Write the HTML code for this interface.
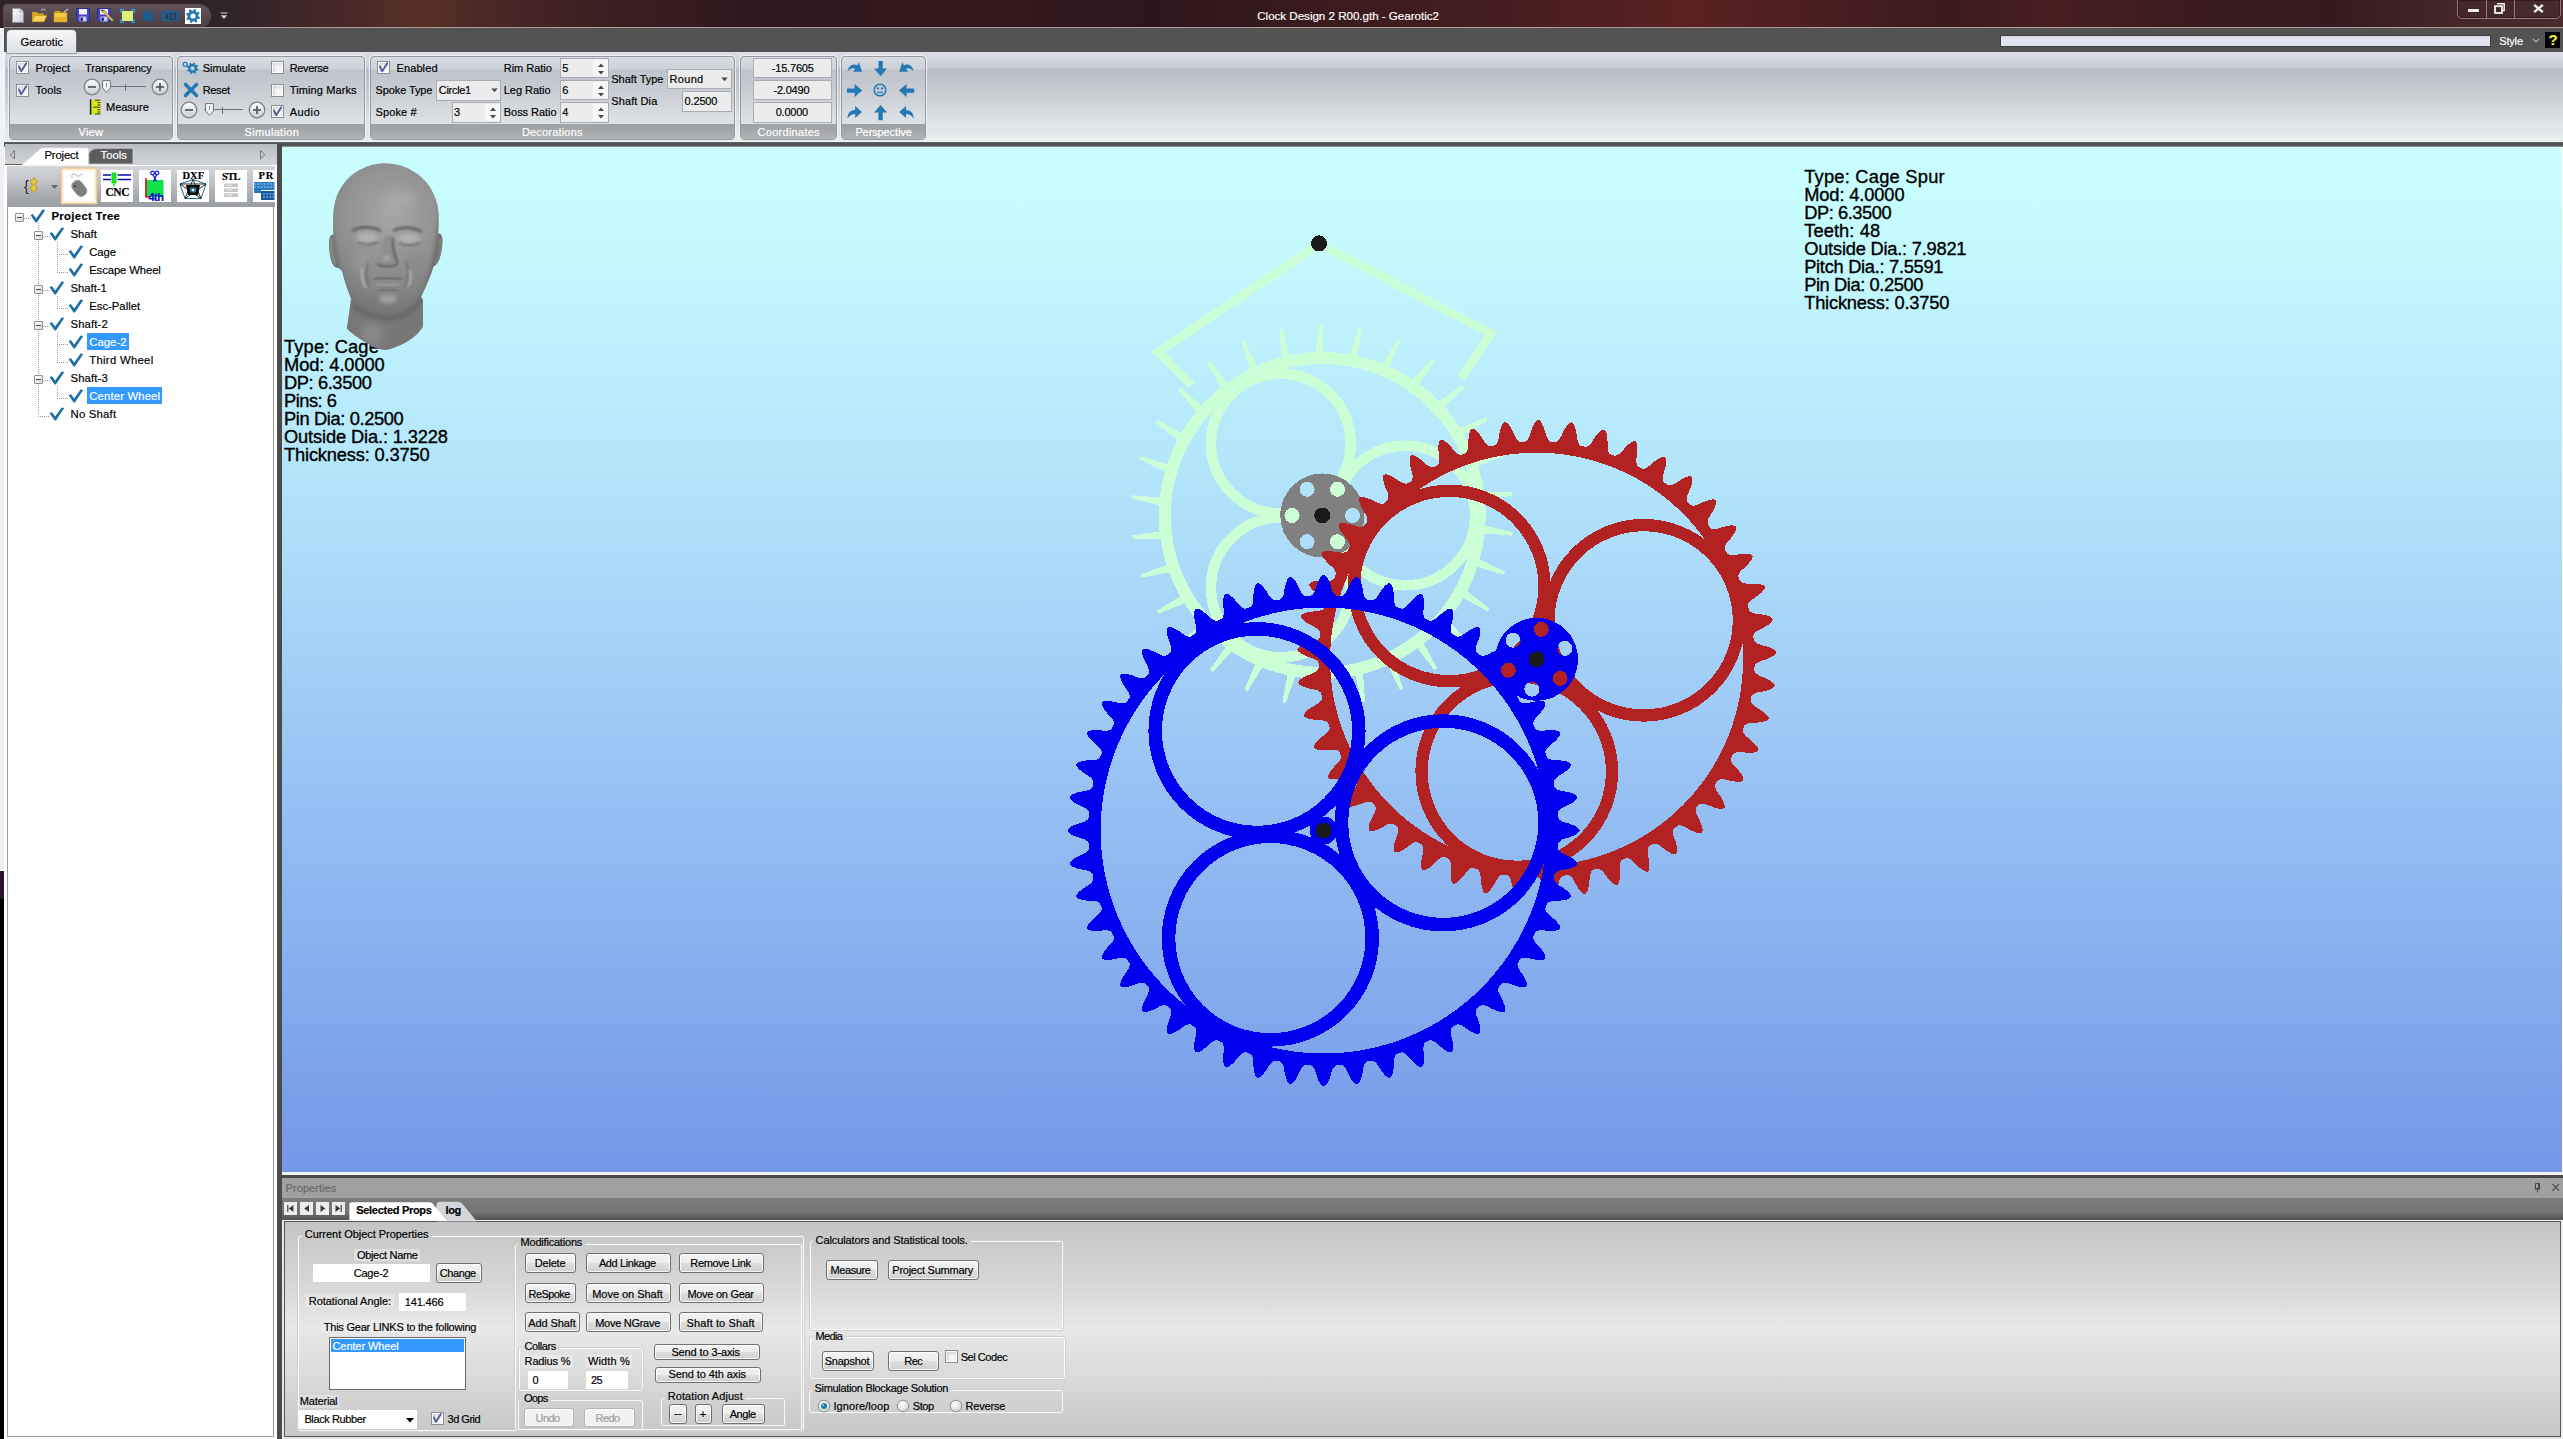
<!DOCTYPE html>
<html><head><meta charset="utf-8"><title>Clock Design 2 R00.gth - Gearotic2</title>
<style>
html,body{margin:0;padding:0;}
body{width:2563px;height:1439px;position:relative;overflow:hidden;background:#e8e8e8;font-family:"Liberation Sans",sans-serif;}
.t{position:absolute;white-space:nowrap;line-height:20px;font-family:"Liberation Sans",sans-serif;-webkit-text-stroke:0.18px currentColor;}
.abs{position:absolute;}
svg{position:absolute;left:0;top:0;overflow:visible;}
</style></head>
<body>
<div style="position:absolute;left:0.00px;top:0.00px;width:5.00px;height:1439.00px;background:linear-gradient(#f4f6fa,#f4f6fa);"></div>
<div style="position:absolute;left:0.00px;top:21.00px;width:4.00px;height:129.00px;background:#eef2fa;"></div>
<div style="position:absolute;left:0.00px;top:150.00px;width:4.00px;height:720.00px;background:#f0f0f0;"></div>
<div style="position:absolute;left:0.00px;top:870.00px;width:4.00px;height:29.00px;background:#2a1430;border-top:1px solid #fff;"></div>
<div style="position:absolute;left:0.00px;top:899.00px;width:4.00px;height:540.00px;background:#000;"></div>
<div style="position:absolute;left:4.00px;top:147.00px;width:3.00px;height:1292.00px;background:#fff;"></div>
<div style="position:absolute;left:0.00px;top:0.00px;width:2563.00px;height:28.00px;background:linear-gradient(90deg,#2e2227 0%,#30232a 9%,#4a2a26 14%,#5a3028 16.5%,#4a2824 19%,#3c2022 23%,#2c171d 30%,#33191e 37%,#2c161c 45%,#3a1b1e 52%,#441d1f 58%,#5a2120 66%,#4a1e1f 71%,#3a1a1d 76%,#491e1f 80%,#381b1f 86%,#341a1e 91%,#45272a 96%,#4a2c2e 100%);"></div>
<div style="position:absolute;left:4.00px;top:27.00px;width:2559.00px;height:1.00px;background:#b09a9c;"></div>
<div style="position:absolute;left:4.00px;top:28.00px;width:2559.00px;height:24.00px;background:#535353;"></div>
<div style="position:absolute;left:5.00px;top:52.00px;width:2558.00px;height:90.00px;background:linear-gradient(#dde0e5 0%,#c6cad2 18%,#b9bdc6 19%,#c4c8ce 40%,#dfe4e6 80%,#e8f0f0 100%);border-radius:0 0 3px 3px;"></div>
<div style="position:absolute;left:4.00px;top:142.00px;width:2559.00px;height:5.00px;background:linear-gradient(#6a6a6a,#4a4a4a 40%,#5a5a5a 70%,#9a9a9a);"></div>
<div class="abs" style="left:7px;top:30px;width:69px;height:23px;border-radius:4px 4px 0 0;background:linear-gradient(#f6f6f7,#e9ebee 55%,#dcdfe4);box-shadow:0 0 0 1px rgba(120,120,120,.6);"></div>
<span class="t" style="left:20.60px;top:32.08px;font-size:11.3px;color:#000;letter-spacing:-0.029px;">Gearotic</span>
<div class="abs" style="left:9px;top:56px;width:164px;height:84px;box-sizing:border-box;border:1px solid #959aa1;border-radius:4px;background:linear-gradient(#d9dce2 0%,#cdd1d8 15%,#bfc4cc 16%,#c8ccd3 40%,#dde2e5 80%,#e3e9ea 100%);box-shadow:0 0 0 1px rgba(240,243,246,.85);overflow:hidden;"><div class="abs" style="left:0;right:0;bottom:0;height:15px;background:linear-gradient(#9c9fa3,#a6a9ac 50%,#b1b3b5);"></div></div><span class="t" style="left:78.50px;top:121.79px;font-size:11px;color:#fff;letter-spacing:0.267px;">View</span>
<div class="abs" style="left:177px;top:56px;width:188px;height:84px;box-sizing:border-box;border:1px solid #959aa1;border-radius:4px;background:linear-gradient(#d9dce2 0%,#cdd1d8 15%,#bfc4cc 16%,#c8ccd3 40%,#dde2e5 80%,#e3e9ea 100%);box-shadow:0 0 0 1px rgba(240,243,246,.85);overflow:hidden;"><div class="abs" style="left:0;right:0;bottom:0;height:15px;background:linear-gradient(#9c9fa3,#a6a9ac 50%,#b1b3b5);"></div></div><span class="t" style="left:244.60px;top:121.79px;font-size:11px;color:#fff;letter-spacing:0.311px;">Simulation</span>
<div class="abs" style="left:370px;top:56px;width:365px;height:84px;box-sizing:border-box;border:1px solid #959aa1;border-radius:4px;background:linear-gradient(#d9dce2 0%,#cdd1d8 15%,#bfc4cc 16%,#c8ccd3 40%,#dde2e5 80%,#e3e9ea 100%);box-shadow:0 0 0 1px rgba(240,243,246,.85);overflow:hidden;"><div class="abs" style="left:0;right:0;bottom:0;height:15px;background:linear-gradient(#9c9fa3,#a6a9ac 50%,#b1b3b5);"></div></div><span class="t" style="left:521.90px;top:121.79px;font-size:11px;color:#fff;letter-spacing:0.190px;">Decorations</span>
<div class="abs" style="left:740px;top:56px;width:97px;height:84px;box-sizing:border-box;border:1px solid #959aa1;border-radius:4px;background:linear-gradient(#d9dce2 0%,#cdd1d8 15%,#bfc4cc 16%,#c8ccd3 40%,#dde2e5 80%,#e3e9ea 100%);box-shadow:0 0 0 1px rgba(240,243,246,.85);overflow:hidden;"><div class="abs" style="left:0;right:0;bottom:0;height:15px;background:linear-gradient(#9c9fa3,#a6a9ac 50%,#b1b3b5);"></div></div><span class="t" style="left:757.60px;top:121.79px;font-size:11px;color:#fff;letter-spacing:0.270px;">Coordinates</span>
<div class="abs" style="left:840.5px;top:56px;width:85.0px;height:84px;box-sizing:border-box;border:1px solid #959aa1;border-radius:4px;background:linear-gradient(#d9dce2 0%,#cdd1d8 15%,#bfc4cc 16%,#c8ccd3 40%,#dde2e5 80%,#e3e9ea 100%);box-shadow:0 0 0 1px rgba(240,243,246,.85);overflow:hidden;"><div class="abs" style="left:0;right:0;bottom:0;height:15px;background:linear-gradient(#9c9fa3,#a6a9ac 50%,#b1b3b5);"></div></div><span class="t" style="left:855.40px;top:121.79px;font-size:11px;color:#fff;letter-spacing:-0.110px;">Perspective</span>
<div class="abs" style="left:16px;top:61px;width:13px;height:13px;box-sizing:border-box;border:1px solid #8e8f8f;background:#f4f4f4;box-shadow:inset 0 0 0 1px #f9f9f9, inset 2px 2px 3px #c8ccd2;"></div><svg class="abs" style="left:16px;top:61px" width="13" height="13" viewBox="0 0 13 13"><path d="M3 5.6 L5.2 10.2 L10.3 2.2" fill="none" stroke="#4a5f97" stroke-width="1.9" stroke-linecap="round" stroke-linejoin="round"/></svg>
<span class="t" style="left:35.60px;top:58.09px;font-size:11px;color:#000;letter-spacing:0.025px;">Project</span>
<div class="abs" style="left:16px;top:83.5px;width:13px;height:13px;box-sizing:border-box;border:1px solid #8e8f8f;background:#f4f4f4;box-shadow:inset 0 0 0 1px #f9f9f9, inset 2px 2px 3px #c8ccd2;"></div><svg class="abs" style="left:16px;top:83.5px" width="13" height="13" viewBox="0 0 13 13"><path d="M3 5.6 L5.2 10.2 L10.3 2.2" fill="none" stroke="#4a5f97" stroke-width="1.9" stroke-linecap="round" stroke-linejoin="round"/></svg>
<span class="t" style="left:35.40px;top:79.94px;font-size:11px;color:#000;letter-spacing:0.125px;">Tools</span>
<span class="t" style="left:85.00px;top:58.09px;font-size:11px;color:#000;">Transparency</span>
<svg class="abs" style="left:82.9px;top:77.9px" width="18" height="18" viewBox="-9 -9 18 18"><defs><linearGradient id="zc" x1="0" y1="0" x2="0" y2="1"><stop offset="0" stop-color="#fdfdfd"/><stop offset="1" stop-color="#c9cdd2"/></linearGradient></defs><circle r="7.8" fill="url(#zc)" stroke="#7e8288" stroke-width="1.3"/><path d="M-4 0H4" stroke="#5b5f66" stroke-width="1.8"/></svg>
<svg class="abs" style="left:151.25px;top:77.9px" width="18" height="18" viewBox="-9 -9 18 18"><defs><linearGradient id="zc" x1="0" y1="0" x2="0" y2="1"><stop offset="0" stop-color="#fdfdfd"/><stop offset="1" stop-color="#c9cdd2"/></linearGradient></defs><circle r="7.8" fill="url(#zc)" stroke="#7e8288" stroke-width="1.3"/><path d="M-4 0H4" stroke="#5b5f66" stroke-width="1.8"/><path d="M0 -4V4" stroke="#5b5f66" stroke-width="1.8"/></svg>
<div class="abs" style="left:110px;top:86.2px;width:35.599999999999994px;height:1px;background:#6d7178;"></div><div class="abs" style="left:125.1px;top:83.7px;width:1px;height:7px;background:#6d7178;"></div><svg class="abs" style="left:102.3px;top:80.4px" width="9" height="13" viewBox="0 0 9 13"><path d="M0.6 0.6H8.4V8L4.5 12.3L0.6 8Z" fill="#f4f5f6" stroke="#6f737a" stroke-width="1"/><path d="M4.5 3V7" stroke="#8a8e94" stroke-width="1"/></svg>
<svg class="abs" style="left:89px;top:99px" width="13" height="16" viewBox="0 0 13 16"><rect x="1.6" y="0.8" width="9.8" height="14.4" fill="#d8ea1e"/><path d="M1.6 0.3V15.7" stroke="#222" stroke-width="1.5"/><path d="M6 1.2H11.4M8.5 3.6H11.4M8.5 6H11.4M4 8.2H11.4M8.5 10.6H11.4M8.5 13H11.4M6 15H11.4" stroke="#3a3a10" stroke-width="1"/></svg>
<span class="t" style="left:106.00px;top:96.79px;font-size:11px;color:#000;letter-spacing:-0.008px;">Measure</span>
<svg class="abs" style="left:182px;top:61px" width="18" height="14" viewBox="0 0 18 14"><path transform="translate(10.6,7.3)" d="M5.79,1.15 L5.45,2.26 L3.63,2.43 L3.09,3.09 L3.28,4.91 L2.26,5.45 L0.85,4.28 L0.00,4.37 L-1.15,5.79 L-2.26,5.45 L-2.43,3.63 L-3.09,3.09 L-4.91,3.28 L-5.45,2.26 L-4.28,0.85 L-4.37,0.00 L-5.79,-1.15 L-5.45,-2.26 L-3.63,-2.43 L-3.09,-3.09 L-3.28,-4.91 L-2.26,-5.45 L-0.85,-4.28 L-0.00,-4.37 L1.15,-5.79 L2.26,-5.45 L2.43,-3.63 L3.09,-3.09 L4.91,-3.28 L5.45,-2.26 L4.28,-0.85 L4.37,-0.00Z M-2.12,0 a2.12,2.12 0 1,0 4.25,0 a2.12,2.12 0 1,0 -4.25,0Z" fill="#2479b4" fill-rule="evenodd"/><circle cx="3.2" cy="3.4" r="2.1" fill="none" stroke="#2479b4" stroke-width="1.3"/></svg>
<span class="t" style="left:202.75px;top:58.19px;font-size:11px;color:#000;letter-spacing:0.007px;">Simulate</span>
<svg class="abs" style="left:182.5px;top:82px" width="16" height="16" viewBox="0 0 16 16"><path d="M2.5 2.5L13.5 13.5M13.5 2.5L2.5 13.5" stroke="#2479b4" stroke-width="3.6" stroke-linecap="round"/></svg>
<span class="t" style="left:202.75px;top:79.94px;font-size:11px;color:#000;letter-spacing:-0.375px;">Reset</span>
<svg class="abs" style="left:180.4px;top:101px" width="18" height="18" viewBox="-9 -9 18 18"><defs><linearGradient id="zc" x1="0" y1="0" x2="0" y2="1"><stop offset="0" stop-color="#fdfdfd"/><stop offset="1" stop-color="#c9cdd2"/></linearGradient></defs><circle r="7.8" fill="url(#zc)" stroke="#7e8288" stroke-width="1.3"/><path d="M-4 0H4" stroke="#5b5f66" stroke-width="1.8"/></svg>
<svg class="abs" style="left:248.10000000000002px;top:101px" width="18" height="18" viewBox="-9 -9 18 18"><defs><linearGradient id="zc" x1="0" y1="0" x2="0" y2="1"><stop offset="0" stop-color="#fdfdfd"/><stop offset="1" stop-color="#c9cdd2"/></linearGradient></defs><circle r="7.8" fill="url(#zc)" stroke="#7e8288" stroke-width="1.3"/><path d="M-4 0H4" stroke="#5b5f66" stroke-width="1.8"/><path d="M0 -4V4" stroke="#5b5f66" stroke-width="1.8"/></svg>
<div class="abs" style="left:203.75px;top:109.3px;width:38.75px;height:1px;background:#6d7178;"></div><div class="abs" style="left:222.4px;top:106.8px;width:1px;height:7px;background:#6d7178;"></div><svg class="abs" style="left:205.4px;top:103.3px" width="9" height="13" viewBox="0 0 9 13"><path d="M0.6 0.6H8.4V8L4.5 12.3L0.6 8Z" fill="#f4f5f6" stroke="#6f737a" stroke-width="1"/><path d="M4.5 3V7" stroke="#8a8e94" stroke-width="1"/></svg>
<div class="abs" style="left:270.5px;top:61px;width:13px;height:13px;box-sizing:border-box;border:1px solid #8e8f8f;background:#f4f4f4;box-shadow:inset 0 0 0 1px #f9f9f9, inset 2px 2px 3px #c8ccd2;"></div>
<span class="t" style="left:289.75px;top:58.09px;font-size:11px;color:#000;letter-spacing:-0.350px;">Reverse</span>
<div class="abs" style="left:270.5px;top:83.5px;width:13px;height:13px;box-sizing:border-box;border:1px solid #8e8f8f;background:#f4f4f4;box-shadow:inset 0 0 0 1px #f9f9f9, inset 2px 2px 3px #c8ccd2;"></div>
<span class="t" style="left:289.75px;top:79.94px;font-size:11px;color:#000;letter-spacing:0.114px;">Timing Marks</span>
<div class="abs" style="left:270.5px;top:105.4px;width:13px;height:13px;box-sizing:border-box;border:1px solid #8e8f8f;background:#f4f4f4;box-shadow:inset 0 0 0 1px #f9f9f9, inset 2px 2px 3px #c8ccd2;"></div><svg class="abs" style="left:270.5px;top:105.4px" width="13" height="13" viewBox="0 0 13 13"><path d="M3 5.6 L5.2 10.2 L10.3 2.2" fill="none" stroke="#4a5f97" stroke-width="1.9" stroke-linecap="round" stroke-linejoin="round"/></svg>
<span class="t" style="left:289.75px;top:101.79px;font-size:11px;color:#000;letter-spacing:0.425px;">Audio</span>
<div class="abs" style="left:377px;top:61px;width:13px;height:13px;box-sizing:border-box;border:1px solid #8e8f8f;background:#f4f4f4;box-shadow:inset 0 0 0 1px #f9f9f9, inset 2px 2px 3px #c8ccd2;"></div><svg class="abs" style="left:377px;top:61px" width="13" height="13" viewBox="0 0 13 13"><path d="M3 5.6 L5.2 10.2 L10.3 2.2" fill="none" stroke="#4a5f97" stroke-width="1.9" stroke-linecap="round" stroke-linejoin="round"/></svg>
<span class="t" style="left:396.50px;top:58.09px;font-size:11px;color:#000;letter-spacing:0.108px;">Enabled</span>
<span class="t" style="left:375.60px;top:79.94px;font-size:11px;color:#000;letter-spacing:-0.111px;">Spoke Type</span>
<div class="abs" style="left:436px;top:79.75px;width:65px;height:21.0px;box-sizing:border-box;border:1px solid #a9adb3;background:#ececec;"></div><svg class="abs" style="left:490.5px;top:88.0px" width="7" height="5" viewBox="0 0 7 5"><path d="M0.3 0.5H6.7L3.5 4.3Z" fill="#4a4a4a"/></svg><span class="t" style="left:438.75px;top:79.94px;font-size:11px;color:#000;letter-spacing:-0.292px;">Circle1</span>
<span class="t" style="left:375.60px;top:101.79px;font-size:11px;color:#000;letter-spacing:0.092px;">Spoke #</span>
<div class="abs" style="left:451.5px;top:101.9px;width:49.5px;height:20.69999999999999px;box-sizing:border-box;border:1px solid #a9adb3;background:#ececec;"></div><div class="abs" style="left:485px;top:103.9px;width:15px;height:16.69999999999999px;background:#f7f7f7;"></div><svg class="abs" style="left:488.8px;top:106.9px" width="8" height="12" viewBox="0 0 8 12"><path d="M4 0.5L7 4H1Z M4 11.5L7 8H1Z" fill="#4a4a4a"/></svg><span class="t" style="left:453.90px;top:101.79px;font-size:11px;color:#000;">3</span>
<span class="t" style="left:503.75px;top:58.09px;font-size:11px;color:#000;letter-spacing:-0.019px;">Rim Ratio</span>
<span class="t" style="left:503.75px;top:79.94px;font-size:11px;color:#000;letter-spacing:-0.031px;">Leg Ratio</span>
<span class="t" style="left:503.75px;top:101.79px;font-size:11px;color:#000;letter-spacing:-0.039px;">Boss Ratio</span>
<div class="abs" style="left:559.75px;top:57.5px;width:49.25px;height:20.700000000000003px;box-sizing:border-box;border:1px solid #a9adb3;background:#ececec;"></div><div class="abs" style="left:593px;top:59.5px;width:15px;height:16.700000000000003px;background:#f7f7f7;"></div><svg class="abs" style="left:596.8px;top:62.5px" width="8" height="12" viewBox="0 0 8 12"><path d="M4 0.5L7 4H1Z M4 11.5L7 8H1Z" fill="#4a4a4a"/></svg><span class="t" style="left:562.15px;top:58.09px;font-size:11px;color:#000;">5</span>
<div class="abs" style="left:559.75px;top:79.75px;width:49.25px;height:20.650000000000006px;box-sizing:border-box;border:1px solid #a9adb3;background:#ececec;"></div><div class="abs" style="left:593px;top:81.75px;width:15px;height:16.650000000000006px;background:#f7f7f7;"></div><svg class="abs" style="left:596.8px;top:84.75px" width="8" height="12" viewBox="0 0 8 12"><path d="M4 0.5L7 4H1Z M4 11.5L7 8H1Z" fill="#4a4a4a"/></svg><span class="t" style="left:562.15px;top:79.94px;font-size:11px;color:#000;">6</span>
<div class="abs" style="left:559.75px;top:101.9px;width:49.25px;height:20.69999999999999px;box-sizing:border-box;border:1px solid #a9adb3;background:#ececec;"></div><div class="abs" style="left:593px;top:103.9px;width:15px;height:16.69999999999999px;background:#f7f7f7;"></div><svg class="abs" style="left:596.8px;top:106.9px" width="8" height="12" viewBox="0 0 8 12"><path d="M4 0.5L7 4H1Z M4 11.5L7 8H1Z" fill="#4a4a4a"/></svg><span class="t" style="left:562.15px;top:101.79px;font-size:11px;color:#000;">4</span>
<span class="t" style="left:611.30px;top:68.89px;font-size:11px;color:#000;letter-spacing:-0.033px;">Shaft Type</span>
<div class="abs" style="left:667.4px;top:68.5px;width:64.20000000000005px;height:20.900000000000006px;box-sizing:border-box;border:1px solid #a9adb3;background:#ececec;"></div><svg class="abs" style="left:721.1px;top:76.7px" width="7" height="5" viewBox="0 0 7 5"><path d="M0.3 0.5H6.7L3.5 4.3Z" fill="#4a4a4a"/></svg><span class="t" style="left:669.60px;top:68.89px;font-size:11px;color:#000;letter-spacing:0.300px;">Round</span>
<span class="t" style="left:611.30px;top:90.89px;font-size:11px;color:#000;letter-spacing:0.088px;">Shaft Dia</span>
<div class="abs" style="left:682.25px;top:91px;width:49.35000000000002px;height:20.599999999999994px;box-sizing:border-box;border:1px solid #a9adb3;background:#ececec;"></div>
<span class="t" style="left:684.60px;top:90.89px;font-size:11px;color:#000;letter-spacing:-0.170px;">0.2500</span>
<div class="abs" style="left:753.2px;top:57.5px;width:79.19999999999993px;height:20.799999999999997px;box-sizing:border-box;border:1px solid #a9adb3;background:#ececec;"></div>
<span class="t" style="left:771.80px;top:57.99px;font-size:11px;color:#000;letter-spacing:-0.193px;">-15.7605</span>
<div class="abs" style="left:752.5px;top:79.8px;width:79.5px;height:20.700000000000003px;box-sizing:border-box;border:1px solid #a9adb3;background:#ececec;"></div>
<span class="t" style="left:773.50px;top:79.89px;font-size:11px;color:#000;letter-spacing:-0.217px;">-2.0490</span>
<div class="abs" style="left:753.2px;top:102px;width:79.19999999999993px;height:20.599999999999994px;box-sizing:border-box;border:1px solid #a9adb3;background:#ececec;"></div>
<span class="t" style="left:775.70px;top:101.79px;font-size:11px;color:#000;letter-spacing:-0.230px;">0.0000</span>
<svg class="abs" style="left:846.8px;top:60.9px" width="15.2" height="15.2" viewBox="0 0 14 14"><path d="M0.5 9.5C1.5 4 6 2 9.5 4.2L11 1.2L13.8 10L5.5 9.8L7.6 7.2C5.5 6 3 7 0.5 9.5Z" fill="#2479b4"/></svg>
<svg class="abs" style="left:872.6999999999999px;top:60.9px" width="15.2" height="15.2" viewBox="0 0 14 14"><path d="M5 0H9V7H13L7 14L1 7H5Z" fill="#2479b4"/></svg>
<svg class="abs" style="left:899.1px;top:60.9px" width="15.2" height="15.2" viewBox="0 0 14 14"><path d="M13.5 9.5C12.5 4 8 2 4.5 4.2L3 1.2L0.2 10L8.5 9.8L6.4 7.2C8.5 6 11 7 13.5 9.5Z" fill="#2479b4"/></svg>
<svg class="abs" style="left:846.8px;top:82.5px" width="15.2" height="15.2" viewBox="0 0 14 14"><path d="M0 5V9H7V13L14 7L7 1V5Z" fill="#2479b4"/></svg>
<svg class="abs" style="left:873.3px;top:83.1px" width="14" height="14" viewBox="-7 -7 14 14"><circle r="5.8" fill="none" stroke="#2479b4" stroke-width="1.6"/><circle cx="-2.1" cy="-1.6" r="1.1" fill="#2479b4"/><circle cx="2.1" cy="-1.6" r="1.1" fill="#2479b4"/><path d="M-2.6 2.3H2.6" stroke="#2479b4" stroke-width="1.4"/></svg>
<svg class="abs" style="left:899.1px;top:82.5px" width="15.2" height="15.2" viewBox="0 0 14 14"><path d="M14 5V9H7V13L0 7L7 1V5Z" fill="#2479b4"/></svg>
<svg class="abs" style="left:846.8px;top:104.7px" width="15.2" height="15.2" viewBox="0 0 14 14"><path d="M0.5 12.5C0.5 7 3.5 4.5 7.5 4.5V1L13.8 6.5L7.5 12V8.3C4.5 8.3 2.5 9.5 0.5 12.5Z" fill="#2479b4"/></svg>
<svg class="abs" style="left:872.6999999999999px;top:104.7px" width="15.2" height="15.2" viewBox="0 0 14 14"><path d="M5 14H9V7H13L7 0L1 7H5Z" fill="#2479b4"/></svg>
<svg class="abs" style="left:899.1px;top:104.7px" width="15.2" height="15.2" viewBox="0 0 14 14"><path d="M13.5 12.5C13.5 7 10.5 4.5 6.5 4.5V1L0.2 6.5L6.5 12V8.3C9.5 8.3 11.5 9.5 13.5 12.5Z" fill="#2479b4"/></svg>
<div class="abs" style="left:4px;top:5px;width:206px;height:22px;border-radius:3px 11px 11px 3px;background:linear-gradient(#62545a,#55484e 50%,#4a3e44);box-shadow:0 0 0 1px rgba(150,130,135,.45);"></div>
<svg class="abs" style="left:12px;top:8px" width="12" height="15" viewBox="0 0 12 15"><defs><linearGradient id="nd" x1="0" y1="0" x2="1" y2="1"><stop offset="0" stop-color="#fff"/><stop offset="1" stop-color="#c8cad6"/></linearGradient></defs><path d="M0.5 0.5H8L11.5 4V14.5H0.5Z" fill="url(#nd)" stroke="#8a8c98" stroke-width=".7"/><path d="M8 0.5V4H11.5" fill="#e8e8f0" stroke="#8a8c98" stroke-width=".7"/></svg>
<svg class="abs" style="left:31px;top:8px" width="17" height="15" viewBox="0 0 17 15"><path d="M1 4H6L7.5 5.5H13V13.5H1Z" fill="#d9a521"/><path d="M3.5 7.5H16L13 13.8H0.8Z" fill="#f6d35a" stroke="#b98a14" stroke-width=".6"/><path d="M10 2.5C11.5 0.8 13.5 1 14.5 2.5" fill="none" stroke="#c8c8d8" stroke-width="1"/></svg>
<svg class="abs" style="left:53px;top:8px" width="17" height="15" viewBox="0 0 17 15"><path d="M1 4.5H14V14H1Z" fill="#f2c83e" stroke="#b98a14" stroke-width=".6"/><path d="M1 4.5L2 3H7L8 4.5Z" fill="#d9a521"/><path d="M11 4L15 1" stroke="#b8b8c8" stroke-width="1.2"/><path d="M1.5 9H13.5V13.5H1.5Z" fill="#e5b42c"/></svg>
<svg class="abs" style="left:76px;top:8px" width="14" height="14" viewBox="0 0 14 14"><path d="M0.5 0.5H13.5V13.5H2L0.5 12Z" fill="#4343c8" stroke="#22227a" stroke-width=".7"/><rect x="3" y="1" width="8" height="5.5" fill="#f0f0ff"/><rect x="3.5" y="8.5" width="7" height="5" fill="#c8c8e8"/><rect x="4.5" y="9.5" width="2.3" height="3.5" fill="#22227a"/></svg>
<svg class="abs" style="left:97px;top:8px" width="17" height="15" viewBox="0 0 17 15"><path d="M0.5 0.5H13.5V13.5H2L0.5 12Z" fill="#4343c8" stroke="#22227a" stroke-width=".7"/><rect x="3" y="1" width="8" height="5.5" fill="#f0f0ff"/><rect x="3.5" y="8.5" width="7" height="5" fill="#c8c8e8"/><rect x="4.5" y="9.5" width="2.3" height="3.5" fill="#22227a"/><path d="M5 3L15 13.5L16.5 12L7 2Z" fill="#e8c060" stroke="#7a5a1a" stroke-width=".6"/><path d="M3.5 1.5L7 2L5 3.5Z" fill="#333"/></svg>
<svg class="abs" style="left:120px;top:9px" width="15" height="14" viewBox="0 0 15 14"><rect x="2" y="2" width="11" height="10" fill="#dff07a"/><path d="M0.8 4V0.8H4M11 0.8H14.2V4M14.2 10V13.2H11M4 13.2H0.8V10" fill="none" stroke="#2a9af0" stroke-width="1.4"/></svg>
<svg class="abs" style="left:141px;top:9px;filter:blur(.5px)" width="15" height="14" viewBox="0 0 15 14"><rect x="2" y="4" width="10" height="6" rx="2" fill="#1a5f94"/><rect x="4" y="1" width="2" height="3" fill="#1a5f94"/><rect x="8" y="1" width="2" height="3" fill="#1a5f94"/><rect x="1" y="10" width="13" height="2" fill="#1a5f94" opacity=".7"/></svg>
<svg class="abs" style="left:161px;top:10px;filter:blur(.5px)" width="18" height="12" viewBox="0 0 18 12"><rect x="0.5" y="1" width="17" height="10" rx="1.5" fill="#1a5f94"/><rect x="5" y="4" width="2" height="5" fill="#3a3038"/><rect x="9" y="4" width="5" height="5" fill="none" stroke="#3a3038" stroke-width="1.2"/></svg>
<svg class="abs" style="left:185px;top:8px" width="16" height="16" viewBox="0 0 16 16"><rect width="16" height="16" fill="#fff"/><path transform="translate(8,8)" d="M7.06,1.40 L6.65,2.76 L4.43,2.96 L3.77,3.77 L4.00,5.99 L2.76,6.65 L1.04,5.23 L0.00,5.33 L-1.40,7.06 L-2.76,6.65 L-2.96,4.43 L-3.77,3.77 L-5.99,4.00 L-6.65,2.76 L-5.23,1.04 L-5.33,0.00 L-7.06,-1.40 L-6.65,-2.76 L-4.43,-2.96 L-3.77,-3.77 L-4.00,-5.99 L-2.76,-6.65 L-1.04,-5.23 L-0.00,-5.33 L1.40,-7.06 L2.76,-6.65 L2.96,-4.43 L3.77,-3.77 L5.99,-4.00 L6.65,-2.76 L5.23,-1.04 L5.33,-0.00Z M-2.59,0 a2.59,2.59 0 1,0 5.18,0 a2.59,2.59 0 1,0 -5.18,0Z" fill="#2479b4" fill-rule="evenodd"/></svg>
<svg class="abs" style="left:220px;top:12px" width="8" height="8" viewBox="0 0 8 8"><path d="M0.5 1H7.5" stroke="#d8d0d0" stroke-width="1"/><path d="M0.8 3.2H7.2L4 7Z" fill="#d8d0d0"/></svg>
<span class="t" style="left:1257.25px;top:5.73px;font-size:11.6px;color:#fff;letter-spacing:-0.021px;">Clock Design 2 R00.gth - Gearotic2</span>
<div class="abs" style="left:2457px;top:-1px;width:104px;height:20px;box-sizing:border-box;border:1px solid #8c7a7c;border-radius:0 0 5px 5px;background:rgba(70,40,42,.35);box-shadow:inset 0 0 0 1px rgba(30,10,12,.5);"></div>
<div class="abs" style="left:2486px;top:0;width:1px;height:18px;background:#8c7a7c;"></div><div class="abs" style="left:2514px;top:0;width:1px;height:18px;background:#8c7a7c;"></div>
<div class="abs" style="left:2468px;top:8.5px;width:10.5px;height:3.6px;background:#f2f2f2;border-radius:.5px;box-shadow:0 0 1px #000;"></div>
<svg class="abs" style="left:2494px;top:2.5px" width="11" height="11" viewBox="0 0 11 11"><path d="M3 0.8H10.2V7.5H8.4" fill="none" stroke="#f2f2f2" stroke-width="1.4"/><rect x="1" y="3.2" width="7" height="6.8" fill="none" stroke="#f2f2f2" stroke-width="1.8"/></svg>
<svg class="abs" style="left:2532.5px;top:3.5px" width="11" height="9" viewBox="0 0 11 9"><path d="M1.2 0.8L9.8 8.2M9.8 0.8L1.2 8.2" stroke="#f4f4f4" stroke-width="2.4"/></svg>
<div class="abs" style="left:2001px;top:35.5px;width:489px;height:10.5px;background:linear-gradient(#d8dbe8,#e4e7f2 40%,#e0e3ee);box-shadow:0 0 0 1px #3e3e3e;"></div>
<span class="t" style="left:2499.25px;top:30.59px;font-size:11px;color:#fff;letter-spacing:-0.175px;">Style</span>
<svg class="abs" style="left:2532px;top:38px" width="8" height="6" viewBox="0 0 8 6"><path d="M1 1L4 4.2L7 1" fill="none" stroke="#ddd" stroke-width="1"/></svg>
<div class="abs" style="left:2544.5px;top:32.3px;width:15.8px;height:15.5px;background:#000;"></div>
<span class="t" style="left:2548.60px;top:30.40px;font-size:15px;color:#f4f41e;font-weight:bold;">?</span>
<div style="position:absolute;left:4.50px;top:144.00px;width:272.50px;height:1295.00px;background:#fff;"></div>
<div class="abs" style="left:5px;top:144px;width:272px;height:21px;background:linear-gradient(#b9bcc0,#c4c7cb 40%,#d2d5d8);"></div>
<div class="abs" style="left:6.8px;top:165.5px;width:267.4px;height:1271px;box-sizing:border-box;border:1px solid #9c9c9c;border-top:none;"></div>
<div class="abs" style="left:4.5px;top:164px;width:19.5px;height:1px;background:#5e5e5e;"></div>
<svg class="abs" style="left:0;top:0" width="300" height="170" viewBox="0 0 300 170"><path d="M22 165 L41 148.5 Q42 148 43.5 148 H87 Q88.3 148 88.3 149.5 V165Z" fill="#fff" stroke="#e8e8e8" stroke-width=".6"/><path d="M88.8 164 V153 Q92 148.2 97 148.2 H132 Q133 148.2 133 149.2 V164Z" fill="#5c5c5c" stroke="#d8d8d8" stroke-width=".8"/><path d="M14.5 150.5L10.5 154.8L14.5 159" fill="none" stroke="#777" stroke-width="1"/><path d="M14.5 150.5V159" stroke="#777" stroke-width="1"/><path d="M260.5 150.5L264.8 154.8L260.5 159Z" fill="none" stroke="#777" stroke-width="1"/></svg>
<span class="t" style="left:44.40px;top:145.48px;font-size:11.3px;color:#000;letter-spacing:-0.133px;">Project</span>
<span class="t" style="left:100.60px;top:145.48px;font-size:11.3px;color:#fff;letter-spacing:-0.025px;">Tools</span>
<div class="abs" style="left:7px;top:166px;width:267.5px;height:41px;background:linear-gradient(#d4d6da 0%,#c2c5c9 35%,#a9acb1 70%,#9a9da2 100%);"></div>
<span class="t" style="left:24.00px;top:175.65px;font-size:14px;color:#111;text-shadow:0 0 1px #fff, 0 0 1px #fff;">{</span>
<svg class="abs" style="left:28px;top:177px" width="11" height="16" viewBox="0 0 11 16"><path d="M2 4L6 0.8L9.5 4.5L6.5 7.8L9.8 11L5.5 15L1.8 11.5L4.5 8Z" fill="#e8c32a" stroke="#a88414" stroke-width=".7"/><path d="M5 4.2L6.2 3L7.3 4.3L6 5.6Z M4.8 11L6 9.8L7.2 11L6 12.3Z" fill="#c4c6ca"/></svg>
<svg class="abs" style="left:51px;top:184.5px" width="7" height="4" viewBox="0 0 7 4"><path d="M0 0H7L3.5 4Z" fill="#666"/></svg>
<div class="abs" style="left:61px;top:167.8px;width:36px;height:36px;box-sizing:border-box;border:1.5px solid #f0cfa0;background:#fff;box-shadow:inset 0 0 0 1.5px #fbead0, 0 0 2px #e8b878;"></div>
<svg class="abs" style="left:66px;top:172px" width="26" height="28" viewBox="0 0 26 28"><path d="M6 6C5 2 8 0.5 10 3C12 6 14 3 16.5 1.5" fill="none" stroke="#999" stroke-width=".8"/><g transform="rotate(-38 13 16)"><rect x="7.5" y="8" width="11" height="17" rx="5" fill="#7d7d7d"/><rect x="7.5" y="8" width="11" height="17" rx="5" fill="none" stroke="#9a9a9a" stroke-width=".8"/><circle cx="11" cy="12" r="1" fill="#333"/></g></svg>
<div class="abs" style="left:101px;top:170px;width:32px;height:32px;background:#fff;"></div>
<div class="abs" style="left:139px;top:170px;width:32px;height:32px;background:#fff;"></div>
<div class="abs" style="left:177px;top:170px;width:32px;height:32px;background:#fff;"></div>
<div class="abs" style="left:215px;top:170px;width:32px;height:32px;background:#fff;"></div>
<div class="abs" style="left:253px;top:170px;width:21.5px;height:32px;background:#fff;"></div>
<svg class="abs" style="left:101px;top:170px" width="32" height="32" viewBox="0 0 32 32"><path d="M2 5H10M2 9.5H10M16.5 5H30M16.5 9.5H30" stroke="#0a0ab0" stroke-width="1.6"/><rect x="10.5" y="2.5" width="5" height="11" fill="#1be01b"/><path d="M13 13.5V16.5" stroke="#1be01b" stroke-width="1.5"/></svg>
<span class="t" style="left:105.50px;top:181.82px;font-size:11.5px;color:#000;font-weight:bold;letter-spacing:-0.450px;font-family:'Liberation Serif',serif;">CNC</span>
<svg class="abs" style="left:139px;top:170px" width="32" height="32" viewBox="0 0 32 32"><rect x="6.5" y="10" width="18" height="17" fill="#10e24a"/><path d="M7 8V27" stroke="#e01010" stroke-width="1.6"/><circle cx="13.5" cy="3" r="1.8" fill="none" stroke="#1a1ae0" stroke-width="1.3"/><circle cx="18" cy="3" r="1.8" fill="none" stroke="#1a1ae0" stroke-width="1.3"/><path d="M14 5L17.5 11.5M17.5 5L14.5 11.5" stroke="#1a1ae0" stroke-width="1.4"/><path d="M6.5 27H11" stroke="#e01010" stroke-width="1.5"/></svg>
<span class="t" style="left:148.50px;top:187.19px;font-size:11px;color:#0a0ac8;font-weight:bold;letter-spacing:-0.500px;">4th</span>
<span class="t" style="left:182.50px;top:165.86px;font-size:10.5px;color:#000;font-weight:bold;font-family:'Liberation Serif',serif;">DXF</span>
<svg class="abs" style="left:177px;top:170px" width="32" height="32" viewBox="0 0 32 32"><path d="M16 9.5L29 14L24 28.5H8L3 14Z" fill="none" stroke="#1a6a8a" stroke-width="1"/><path d="M16 9.5L24 28.5M16 9.5L8 28.5M3 14L24 28.5M29 14L8 28.5M3 14H29" stroke="#111" stroke-width=".9"/><path d="M9 15H23L21 25H11Z" fill="#0a0a0a"/><path d="M12.5 17.5H19.5L18.5 22.5H13.5Z" fill="#2a7a9a"/><circle cx="16" cy="20" r="1.3" fill="#eee"/></svg>
<span class="t" style="left:222.00px;top:166.66px;font-size:10.5px;color:#000;font-weight:bold;letter-spacing:-0.675px;font-family:'Liberation Serif',serif;">STL</span>
<svg class="abs" style="left:215px;top:170px" width="32" height="32" viewBox="0 0 32 32"><g fill="#c4c4c4"><rect x="9" y="13.5" width="14" height="3.6" rx="1"/><rect x="9" y="18.4" width="14" height="3.6" rx="1"/><rect x="9" y="23.3" width="14" height="3.6" rx="1"/></g><path d="M11 15.3H17M11 20.2H17M11 25.1H17" stroke="#f0f0f0" stroke-width="1"/></svg>
<span class="t" style="left:258.50px;top:165.56px;font-size:10.5px;color:#000;font-weight:bold;letter-spacing:0.900px;font-family:'Liberation Serif',serif;clip-path:inset(0 0 0 0);">PR</span>
<svg class="abs" style="left:253px;top:170px" width="21.5" height="32" viewBox="0 0 21.5 32"><path d="M1 12H21.5V20H8V23H1Z" fill="#2a7ac0"/><path d="M8 21H21.5V30H8Z" fill="#1a5a9a"/><path d="M1 14H21.5M1 17H21.5M10 24H21.5M10 27H21.5" stroke="#9ad0ff" stroke-width="1" stroke-dasharray="2 1.2"/></svg>
<div class="abs" style="left:38px;top:223px;width:1px;height:191px;background:repeating-linear-gradient(180deg,#9a9a9a 0 1px,transparent 1px 2px);"></div>
<div class="abs" style="left:57px;top:242px;width:1px;height:32px;background:repeating-linear-gradient(180deg,#9a9a9a 0 1px,transparent 1px 2px);"></div>
<div class="abs" style="left:57px;top:296px;width:1px;height:14px;background:repeating-linear-gradient(180deg,#9a9a9a 0 1px,transparent 1px 2px);"></div>
<div class="abs" style="left:57px;top:332px;width:1px;height:32px;background:repeating-linear-gradient(180deg,#9a9a9a 0 1px,transparent 1px 2px);"></div>
<div class="abs" style="left:57px;top:386px;width:1px;height:14px;background:repeating-linear-gradient(180deg,#9a9a9a 0 1px,transparent 1px 2px);"></div>
<div class="abs" style="left:24px;top:217.5px;width:7px;height:1px;background:repeating-linear-gradient(90deg,#9a9a9a 0 1px,transparent 1px 2px);"></div>
<div class="abs" style="left:15px;top:213.0px;width:9px;height:9px;box-sizing:border-box;border:1px solid #919191;background:linear-gradient(135deg,#fff,#d8d8d8);border-radius:1px;"></div><div class="abs" style="left:17px;top:217.0px;width:5px;height:1px;background:#444;"></div>
<svg class="abs" style="left:30px;top:208.9px" width="16" height="14" viewBox="0 0 16 14"><path d="M0.6 6.2L2.8 4.9L6.2 9.6L12.6 0.4L15.3 0.9L6.9 13.6L5.6 13.6Z" fill="#1d6fa5"/></svg>
<span class="t" style="left:51.50px;top:205.58px;font-size:11.3px;color:#000;font-weight:bold;letter-spacing:0.336px;">Project Tree</span>
<div class="abs" style="left:43px;top:235.5px;width:7px;height:1px;background:repeating-linear-gradient(90deg,#9a9a9a 0 1px,transparent 1px 2px);"></div>
<div class="abs" style="left:34px;top:231.0px;width:9px;height:9px;box-sizing:border-box;border:1px solid #919191;background:linear-gradient(135deg,#fff,#d8d8d8);border-radius:1px;"></div><div class="abs" style="left:36px;top:235.0px;width:5px;height:1px;background:#444;"></div>
<svg class="abs" style="left:49px;top:226.9px" width="16" height="14" viewBox="0 0 16 14"><path d="M0.6 6.2L2.8 4.9L6.2 9.6L12.6 0.4L15.3 0.9L6.9 13.6L5.6 13.6Z" fill="#1d6fa5"/></svg>
<span class="t" style="left:70.50px;top:223.58px;font-size:11.3px;color:#000;">Shaft</span>
<div class="abs" style="left:57px;top:253.5px;width:11px;height:1px;background:repeating-linear-gradient(90deg,#9a9a9a 0 1px,transparent 1px 2px);"></div>
<svg class="abs" style="left:68px;top:244.9px" width="16" height="14" viewBox="0 0 16 14"><path d="M0.6 6.2L2.8 4.9L6.2 9.6L12.6 0.4L15.3 0.9L6.9 13.6L5.6 13.6Z" fill="#1d6fa5"/></svg>
<span class="t" style="left:89.20px;top:241.58px;font-size:11.3px;color:#000;letter-spacing:-0.033px;">Cage</span>
<div class="abs" style="left:57px;top:271.5px;width:11px;height:1px;background:repeating-linear-gradient(90deg,#9a9a9a 0 1px,transparent 1px 2px);"></div>
<svg class="abs" style="left:68px;top:262.9px" width="16" height="14" viewBox="0 0 16 14"><path d="M0.6 6.2L2.8 4.9L6.2 9.6L12.6 0.4L15.3 0.9L6.9 13.6L5.6 13.6Z" fill="#1d6fa5"/></svg>
<span class="t" style="left:89.20px;top:259.58px;font-size:11.3px;color:#000;letter-spacing:-0.105px;">Escape Wheel</span>
<div class="abs" style="left:43px;top:289.5px;width:7px;height:1px;background:repeating-linear-gradient(90deg,#9a9a9a 0 1px,transparent 1px 2px);"></div>
<div class="abs" style="left:34px;top:285.0px;width:9px;height:9px;box-sizing:border-box;border:1px solid #919191;background:linear-gradient(135deg,#fff,#d8d8d8);border-radius:1px;"></div><div class="abs" style="left:36px;top:289.0px;width:5px;height:1px;background:#444;"></div>
<svg class="abs" style="left:49px;top:280.9px" width="16" height="14" viewBox="0 0 16 14"><path d="M0.6 6.2L2.8 4.9L6.2 9.6L12.6 0.4L15.3 0.9L6.9 13.6L5.6 13.6Z" fill="#1d6fa5"/></svg>
<span class="t" style="left:70.50px;top:277.58px;font-size:11.3px;color:#000;letter-spacing:-0.008px;">Shaft-1</span>
<div class="abs" style="left:57px;top:307.5px;width:11px;height:1px;background:repeating-linear-gradient(90deg,#9a9a9a 0 1px,transparent 1px 2px);"></div>
<svg class="abs" style="left:68px;top:298.9px" width="16" height="14" viewBox="0 0 16 14"><path d="M0.6 6.2L2.8 4.9L6.2 9.6L12.6 0.4L15.3 0.9L6.9 13.6L5.6 13.6Z" fill="#1d6fa5"/></svg>
<span class="t" style="left:89.20px;top:295.58px;font-size:11.3px;color:#000;letter-spacing:0.006px;">Esc-Pallet</span>
<div class="abs" style="left:43px;top:325.5px;width:7px;height:1px;background:repeating-linear-gradient(90deg,#9a9a9a 0 1px,transparent 1px 2px);"></div>
<div class="abs" style="left:34px;top:321.0px;width:9px;height:9px;box-sizing:border-box;border:1px solid #919191;background:linear-gradient(135deg,#fff,#d8d8d8);border-radius:1px;"></div><div class="abs" style="left:36px;top:325.0px;width:5px;height:1px;background:#444;"></div>
<svg class="abs" style="left:49px;top:316.9px" width="16" height="14" viewBox="0 0 16 14"><path d="M0.6 6.2L2.8 4.9L6.2 9.6L12.6 0.4L15.3 0.9L6.9 13.6L5.6 13.6Z" fill="#1d6fa5"/></svg>
<span class="t" style="left:70.50px;top:313.58px;font-size:11.3px;color:#000;letter-spacing:0.142px;">Shaft-2</span>
<div class="abs" style="left:57px;top:343.5px;width:11px;height:1px;background:repeating-linear-gradient(90deg,#9a9a9a 0 1px,transparent 1px 2px);"></div>
<svg class="abs" style="left:68px;top:334.9px" width="16" height="14" viewBox="0 0 16 14"><path d="M0.6 6.2L2.8 4.9L6.2 9.6L12.6 0.4L15.3 0.9L6.9 13.6L5.6 13.6Z" fill="#1d6fa5"/></svg>
<div class="abs" style="left:87.0px;top:332.5px;width:41.7px;height:17.6px;background:#3399ff;"></div>
<span class="t" style="left:89.20px;top:331.58px;font-size:11.3px;color:#fff;letter-spacing:0.050px;">Cage-2</span>
<div class="abs" style="left:57px;top:361.5px;width:11px;height:1px;background:repeating-linear-gradient(90deg,#9a9a9a 0 1px,transparent 1px 2px);"></div>
<svg class="abs" style="left:68px;top:352.9px" width="16" height="14" viewBox="0 0 16 14"><path d="M0.6 6.2L2.8 4.9L6.2 9.6L12.6 0.4L15.3 0.9L6.9 13.6L5.6 13.6Z" fill="#1d6fa5"/></svg>
<span class="t" style="left:89.20px;top:349.58px;font-size:11.3px;color:#000;letter-spacing:0.310px;">Third Wheel</span>
<div class="abs" style="left:43px;top:379.5px;width:7px;height:1px;background:repeating-linear-gradient(90deg,#9a9a9a 0 1px,transparent 1px 2px);"></div>
<div class="abs" style="left:34px;top:375.0px;width:9px;height:9px;box-sizing:border-box;border:1px solid #919191;background:linear-gradient(135deg,#fff,#d8d8d8);border-radius:1px;"></div><div class="abs" style="left:36px;top:379.0px;width:5px;height:1px;background:#444;"></div>
<svg class="abs" style="left:49px;top:370.9px" width="16" height="14" viewBox="0 0 16 14"><path d="M0.6 6.2L2.8 4.9L6.2 9.6L12.6 0.4L15.3 0.9L6.9 13.6L5.6 13.6Z" fill="#1d6fa5"/></svg>
<span class="t" style="left:70.50px;top:367.58px;font-size:11.3px;color:#000;letter-spacing:0.142px;">Shaft-3</span>
<div class="abs" style="left:57px;top:397.5px;width:11px;height:1px;background:repeating-linear-gradient(90deg,#9a9a9a 0 1px,transparent 1px 2px);"></div>
<svg class="abs" style="left:68px;top:388.9px" width="16" height="14" viewBox="0 0 16 14"><path d="M0.6 6.2L2.8 4.9L6.2 9.6L12.6 0.4L15.3 0.9L6.9 13.6L5.6 13.6Z" fill="#1d6fa5"/></svg>
<div class="abs" style="left:87.0px;top:386.5px;width:75.3px;height:17.6px;background:#3399ff;"></div>
<span class="t" style="left:89.20px;top:385.58px;font-size:11.3px;color:#fff;letter-spacing:0.164px;">Center Wheel</span>
<div class="abs" style="left:38px;top:415.5px;width:11px;height:1px;background:repeating-linear-gradient(90deg,#9a9a9a 0 1px,transparent 1px 2px);"></div>
<svg class="abs" style="left:49px;top:406.9px" width="16" height="14" viewBox="0 0 16 14"><path d="M0.6 6.2L2.8 4.9L6.2 9.6L12.6 0.4L15.3 0.9L6.9 13.6L5.6 13.6Z" fill="#1d6fa5"/></svg>
<span class="t" style="left:70.50px;top:403.58px;font-size:11.3px;color:#000;letter-spacing:0.236px;">No Shaft</span>
<div style="position:absolute;left:277.00px;top:144.00px;width:4.60px;height:1295.00px;background:#4b4b4b;"></div>
<div style="position:absolute;left:282.00px;top:147.00px;width:2280.00px;height:1025.00px;background:linear-gradient(#c9ffff 0%,#c6fcfe 7%,#b4e7fb 30%,#9fcaf6 55%,#86aeee 80%,#7497e8 100%);"></div>
<span class="t" style="left:284.00px;top:336.66px;font-size:18.3px;color:#000;-webkit-text-stroke:0.35px #000;letter-spacing:0.15px;">Type: Cage</span>
<span class="t" style="left:284.00px;top:354.66px;font-size:18.3px;color:#000;letter-spacing:-0.085px;-webkit-text-stroke:0.35px #000;">Mod: 4.0000</span>
<span class="t" style="left:284.00px;top:372.66px;font-size:18.3px;color:#000;letter-spacing:-0.406px;-webkit-text-stroke:0.35px #000;">DP: 6.3500</span>
<span class="t" style="left:284.00px;top:390.66px;font-size:18.3px;color:#000;letter-spacing:-0.508px;-webkit-text-stroke:0.35px #000;">Pins: 6</span>
<span class="t" style="left:284.00px;top:408.66px;font-size:18.3px;color:#000;letter-spacing:-0.382px;-webkit-text-stroke:0.35px #000;">Pin Dia: 0.2500</span>
<span class="t" style="left:284.00px;top:426.66px;font-size:18.3px;color:#000;letter-spacing:-0.139px;-webkit-text-stroke:0.35px #000;">Outside Dia.: 1.3228</span>
<span class="t" style="left:284.00px;top:444.66px;font-size:18.3px;color:#000;letter-spacing:-0.169px;-webkit-text-stroke:0.35px #000;">Thickness: 0.3750</span>
<span class="t" style="left:1804.20px;top:166.56px;font-size:18.3px;color:#000;letter-spacing:0.232px;-webkit-text-stroke:0.35px #000;">Type: Cage Spur</span>
<span class="t" style="left:1804.20px;top:184.56px;font-size:18.3px;color:#000;letter-spacing:-0.125px;-webkit-text-stroke:0.35px #000;">Mod: 4.0000</span>
<span class="t" style="left:1804.20px;top:202.56px;font-size:18.3px;color:#000;letter-spacing:-0.450px;-webkit-text-stroke:0.35px #000;">DP: 6.3500</span>
<span class="t" style="left:1804.20px;top:220.56px;font-size:18.3px;color:#000;letter-spacing:0.088px;-webkit-text-stroke:0.35px #000;">Teeth: 48</span>
<span class="t" style="left:1804.20px;top:238.56px;font-size:18.3px;color:#000;letter-spacing:-0.229px;-webkit-text-stroke:0.35px #000;">Outside Dia.: 7.9821</span>
<span class="t" style="left:1804.20px;top:256.56px;font-size:18.3px;color:#000;letter-spacing:-0.297px;-webkit-text-stroke:0.35px #000;">Pitch Dia.: 7.5591</span>
<span class="t" style="left:1804.20px;top:274.56px;font-size:18.3px;color:#000;letter-spacing:-0.411px;-webkit-text-stroke:0.35px #000;">Pin Dia: 0.2500</span>
<span class="t" style="left:1804.20px;top:292.56px;font-size:18.3px;color:#000;letter-spacing:-0.200px;-webkit-text-stroke:0.35px #000;">Thickness: 0.3750</span>
<div style="position:absolute;left:2562.00px;top:147.00px;width:1.00px;height:1025.00px;background:#fafafa;"></div>
<svg width="2563" height="1439" viewBox="0 0 2563 1439"><g shape-rendering="crispEdges"><polyline points="1192,385 1158,352 1319,244 1491,333.5 1461,378" fill="none" stroke="#ccffd6" stroke-width="8.5" stroke-linejoin="miter"/>
<circle cx="1322.3" cy="515.5" r="157.5" fill="none" stroke="#ccffd6" stroke-width="12.0"/>
<path d="M1315.2,354.2 L1319.1,324.5 L1322.5,324.5 L1323.2,354.0Z M1348.9,356.2 L1358.9,328.0 L1362.2,328.7 L1356.8,357.7Z M1381.4,365.2 L1397.1,339.7 L1400.2,341.1 L1388.8,368.3Z M1411.4,380.8 L1432.0,359.1 L1434.8,361.1 L1418.0,385.4Z M1437.4,402.2 L1462.1,385.3 L1464.4,387.9 L1442.9,408.1Z M1458.5,428.6 L1486.1,417.2 L1487.8,420.2 L1462.6,435.6Z M1473.5,458.9 L1502.9,453.4 L1504.0,456.7 L1476.2,466.5Z M1482.0,491.5 L1511.9,492.4 L1512.3,495.8 L1483.0,499.6Z M1483.5,525.3 L1512.6,532.3 L1512.2,535.7 L1482.8,533.3Z M1478.0,558.6 L1504.9,571.5 L1503.9,574.8 L1475.6,566.3Z M1465.6,590.0 L1489.3,608.2 L1487.6,611.2 L1461.7,597.1Z M1447.0,618.2 L1466.4,640.9 L1464.1,643.5 L1441.7,624.3Z M1422.9,641.8 L1437.1,668.1 L1434.4,670.2 L1416.5,646.7Z M1394.4,660.0 L1402.9,688.7 L1399.8,690.1 L1387.1,663.4Z M1362.8,671.8 L1365.1,701.6 L1361.8,702.4 L1355.0,673.7Z M1329.4,676.8 L1325.5,706.5 L1322.1,706.5 L1321.4,677.0Z M1295.7,674.8 L1285.7,703.0 L1282.4,702.3 L1287.8,673.3Z M1263.2,665.8 L1247.5,691.3 L1244.4,689.9 L1255.8,662.7Z M1233.2,650.2 L1212.6,671.9 L1209.8,669.9 L1226.6,645.6Z M1207.2,628.8 L1182.5,645.7 L1180.2,643.1 L1201.7,622.9Z M1186.1,602.4 L1158.5,613.8 L1156.8,610.8 L1182.0,595.4Z M1171.1,572.1 L1141.7,577.6 L1140.6,574.3 L1168.4,564.5Z M1162.6,539.5 L1132.7,538.6 L1132.3,535.2 L1161.6,531.4Z M1161.1,505.7 L1132.0,498.7 L1132.4,495.3 L1161.8,497.7Z M1166.6,472.4 L1139.7,459.5 L1140.7,456.2 L1169.0,464.7Z M1179.0,441.0 L1155.3,422.8 L1157.0,419.8 L1182.9,433.9Z M1197.6,412.8 L1178.2,390.1 L1180.5,387.5 L1202.9,406.7Z M1221.7,389.2 L1207.5,362.9 L1210.2,360.8 L1228.1,384.3Z M1250.2,371.0 L1241.7,342.3 L1244.8,340.9 L1257.5,367.6Z M1281.8,359.2 L1279.5,329.4 L1282.8,328.6 L1289.6,357.3Z " fill="#ccffd6"/>
<circle cx="1280.8" cy="443.6" r="69.8" fill="none" stroke="#ccffd6" stroke-width="10.5"/>
<circle cx="1405.3" cy="515.5" r="69.8" fill="none" stroke="#ccffd6" stroke-width="10.5"/>
<circle cx="1280.8" cy="587.4" r="69.8" fill="none" stroke="#ccffd6" stroke-width="10.5"/>
<circle cx="1322.3" cy="515.5" r="12" fill="#ccffd6"/>
<path d="M1280.3,515.5 a42.0,42.0 0 1,0 84.0,0 a42.0,42.0 0 1,0 -84.0,0Z M1345.1,515.5 a7.5,7.5 0 1,0 15.0,0 a7.5,7.5 0 1,0 -15.0,0Z M1330.0,541.7 a7.5,7.5 0 1,0 15.0,0 a7.5,7.5 0 1,0 -15.0,0Z M1299.6,541.7 a7.5,7.5 0 1,0 15.0,0 a7.5,7.5 0 1,0 -15.0,0Z M1284.5,515.5 a7.5,7.5 0 1,0 15.0,0 a7.5,7.5 0 1,0 -15.0,0Z M1299.6,489.3 a7.5,7.5 0 1,0 15.0,0 a7.5,7.5 0 1,0 -15.0,0Z M1330.0,489.3 a7.5,7.5 0 1,0 15.0,0 a7.5,7.5 0 1,0 -15.0,0Z" fill="#808080" fill-rule="evenodd"/>
<circle cx="1322.3" cy="515.5" r="8" fill="#1a1a1a"/>
<path d="M1522.8,441.7 L1523.8,441.7 L1524.9,441.6 L1526.0,441.2 L1527.0,440.3 L1528.1,438.9 L1529.1,437.1 L1530.2,434.1 L1531.2,430.6 L1532.3,427.6 L1533.4,425.0 L1534.5,422.9 L1535.7,421.3 L1536.9,420.2 L1538.1,419.8 L1539.3,420.2 L1540.5,421.3 L1541.6,422.9 L1542.7,425.1 L1543.8,427.7 L1544.9,430.7 L1545.9,434.2 L1546.9,437.2 L1547.9,439.1 L1548.9,440.4 L1549.9,441.3 L1551.0,441.7 L1552.1,441.9 L1553.2,441.9 L1554.3,442.0 L1555.3,442.1 L1556.5,441.8 L1557.6,441.1 L1558.8,439.9 L1560.1,438.3 L1561.6,435.4 L1563.1,432.1 L1564.6,429.3 L1566.0,426.9 L1567.5,424.9 L1568.9,423.5 L1570.2,422.6 L1571.4,422.3 L1572.5,422.9 L1573.6,424.2 L1574.5,425.9 L1575.3,428.2 L1576.0,430.9 L1576.6,434.1 L1577.1,437.7 L1577.7,440.8 L1578.4,442.8 L1579.2,444.3 L1580.1,445.3 L1581.1,445.9 L1582.2,446.1 L1583.3,446.4 L1584.3,446.6 L1585.4,446.8 L1586.5,446.7 L1587.8,446.2 L1589.2,445.1 L1590.7,443.7 L1592.5,441.1 L1594.4,438.0 L1596.3,435.4 L1598.1,433.2 L1599.8,431.5 L1601.4,430.3 L1602.8,429.6 L1604.1,429.5 L1605.1,430.2 L1605.9,431.6 L1606.6,433.5 L1607.1,435.8 L1607.4,438.6 L1607.6,441.9 L1607.6,445.5 L1607.7,448.7 L1608.1,450.7 L1608.7,452.3 L1609.5,453.5 L1610.4,454.1 L1611.4,454.5 L1612.4,454.9 L1613.5,455.3 L1614.5,455.7 L1615.6,455.7 L1616.9,455.4 L1618.5,454.5 L1620.1,453.3 L1622.3,451.0 L1624.7,448.2 L1626.9,445.9 L1629.0,444.0 L1630.9,442.5 L1632.6,441.5 L1634.1,441.0 L1635.4,441.1 L1636.3,442.0 L1636.9,443.5 L1637.3,445.4 L1637.5,447.8 L1637.4,450.6 L1637.1,453.9 L1636.6,457.4 L1636.3,460.6 L1636.5,462.7 L1636.9,464.4 L1637.4,465.6 L1638.2,466.4 L1639.2,467.0 L1640.2,467.5 L1641.1,468.0 L1642.1,468.5 L1643.2,468.7 L1644.5,468.5 L1646.2,467.9 L1648.0,466.9 L1650.5,464.9 L1653.2,462.5 L1655.7,460.5 L1658.0,458.9 L1660.1,457.7 L1662.0,457.0 L1663.6,456.7 L1664.8,457.0 L1665.6,458.0 L1666.0,459.5 L1666.1,461.5 L1665.9,463.9 L1665.5,466.7 L1664.7,469.8 L1663.7,473.3 L1663.0,476.4 L1662.9,478.5 L1663.0,480.2 L1663.4,481.5 L1664.1,482.4 L1665.0,483.1 L1665.8,483.7 L1666.7,484.4 L1667.6,485.0 L1668.7,485.4 L1670.0,485.4 L1671.7,485.0 L1673.7,484.3 L1676.4,482.7 L1679.4,480.7 L1682.2,479.0 L1684.7,477.8 L1687.0,476.9 L1688.9,476.4 L1690.5,476.4 L1691.7,476.8 L1692.3,477.9 L1692.5,479.5 L1692.4,481.5 L1691.9,483.8 L1691.0,486.5 L1689.9,489.5 L1688.4,492.8 L1687.2,495.8 L1686.8,497.8 L1686.7,499.6 L1686.9,500.9 L1687.5,501.9 L1688.2,502.7 L1689.0,503.4 L1689.8,504.2 L1690.6,504.9 L1691.6,505.5 L1693.0,505.7 L1694.7,505.5 L1696.7,505.1 L1699.6,503.8 L1702.9,502.3 L1705.9,501.1 L1708.6,500.2 L1710.9,499.6 L1712.9,499.4 L1714.5,499.6 L1715.6,500.2 L1716.1,501.3 L1716.0,502.9 L1715.6,504.9 L1714.8,507.1 L1713.6,509.7 L1712.0,512.5 L1710.1,515.6 L1708.5,518.3 L1707.8,520.3 L1707.5,522.0 L1707.5,523.4 L1707.9,524.4 L1708.6,525.3 L1709.2,526.2 L1709.9,527.0 L1710.6,527.9 L1711.5,528.5 L1712.8,528.9 L1714.5,529.0 L1716.6,528.9 L1719.7,528.0 L1723.1,527.0 L1726.3,526.2 L1729.0,525.6 L1731.4,525.4 L1733.4,525.5 L1735.0,525.9 L1736.0,526.6 L1736.3,527.9 L1736.1,529.4 L1735.4,531.3 L1734.2,533.4 L1732.7,535.8 L1730.7,538.3 L1728.4,541.1 L1726.4,543.6 L1725.5,545.5 L1724.9,547.1 L1724.8,548.5 L1725.0,549.6 L1725.5,550.5 L1726.1,551.5 L1726.6,552.4 L1727.2,553.4 L1728.0,554.2 L1729.2,554.7 L1730.9,555.0 L1733.0,555.2 L1736.2,554.8 L1739.7,554.2 L1743.0,553.8 L1745.8,553.7 L1748.2,553.8 L1750.1,554.2 L1751.6,554.8 L1752.5,555.7 L1752.6,556.9 L1752.2,558.5 L1751.2,560.2 L1749.8,562.1 L1748.0,564.3 L1745.7,566.5 L1743.0,569.0 L1740.7,571.2 L1739.5,572.9 L1738.7,574.4 L1738.4,575.7 L1738.5,576.9 L1738.8,577.9 L1739.2,578.9 L1739.6,579.9 L1740.1,580.9 L1740.8,581.8 L1741.9,582.5 L1743.6,583.1 L1745.6,583.5 L1748.8,583.6 L1752.4,583.5 L1755.6,583.6 L1758.4,583.9 L1760.8,584.3 L1762.7,584.9 L1764.1,585.7 L1764.8,586.7 L1764.8,588.0 L1764.1,589.4 L1762.9,591.0 L1761.3,592.8 L1759.1,594.6 L1756.5,596.5 L1753.5,598.6 L1751.0,600.4 L1749.6,602.0 L1748.5,603.4 L1748.0,604.6 L1748.0,605.8 L1748.2,606.8 L1748.5,607.9 L1748.7,608.9 L1749.0,610.0 L1749.6,611.0 L1750.6,611.9 L1752.1,612.7 L1754.1,613.4 L1757.2,613.8 L1760.8,614.3 L1764.0,614.8 L1766.8,615.5 L1769.0,616.2 L1770.8,617.1 L1772.1,618.1 L1772.7,619.2 L1772.5,620.4 L1771.6,621.8 L1770.2,623.2 L1768.3,624.7 L1766.0,626.2 L1763.1,627.8 L1759.9,629.4 L1757.1,630.8 L1755.5,632.2 L1754.3,633.4 L1753.6,634.6 L1753.4,635.7 L1753.4,636.8 L1753.5,637.9 L1753.6,639.0 L1753.8,640.0 L1754.2,641.1 L1755.1,642.1 L1756.5,643.1 L1758.4,644.1 L1761.4,645.0 L1764.9,645.9 L1768.0,646.9 L1770.6,647.9 L1772.8,649.0 L1774.4,650.1 L1775.5,651.3 L1776.0,652.4 L1775.6,653.6 L1774.6,654.9 L1773.0,656.1 L1770.9,657.3 L1768.3,658.4 L1765.3,659.6 L1761.9,660.7 L1758.9,661.8 L1757.1,662.9 L1755.7,664.0 L1754.9,665.0 L1754.5,666.1 L1754.5,667.2 L1754.4,668.3 L1754.4,669.4 L1754.3,670.5 L1754.6,671.6 L1755.4,672.7 L1756.7,673.9 L1758.3,675.1 L1761.2,676.4 L1764.6,677.8 L1767.5,679.2 L1769.9,680.6 L1771.9,682.0 L1773.4,683.3 L1774.3,684.6 L1774.6,685.8 L1774.1,687.0 L1772.9,688.0 L1771.1,689.0 L1768.9,689.9 L1766.2,690.7 L1763.1,691.4 L1759.5,692.1 L1756.4,692.7 L1754.5,693.5 L1753.0,694.4 L1752.0,695.4 L1751.5,696.4 L1751.2,697.4 L1751.0,698.5 L1750.8,699.6 L1750.7,700.6 L1750.8,701.8 L1751.4,703.0 L1752.5,704.4 L1754.0,705.8 L1756.7,707.5 L1759.8,709.4 L1762.5,711.2 L1764.7,712.9 L1766.5,714.5 L1767.7,716.0 L1768.5,717.4 L1768.6,718.7 L1767.9,719.7 L1766.6,720.6 L1764.7,721.4 L1762.4,721.9 L1759.6,722.4 L1756.4,722.6 L1752.8,722.8 L1749.6,723.0 L1747.6,723.5 L1746.0,724.2 L1744.9,725.0 L1744.2,725.9 L1743.8,726.9 L1743.5,728.0 L1743.2,729.0 L1742.8,730.0 L1742.8,731.2 L1743.2,732.5 L1744.1,734.0 L1745.4,735.6 L1747.8,737.7 L1750.6,739.9 L1753.0,742.1 L1755.0,744.1 L1756.6,746.0 L1757.6,747.6 L1758.1,749.1 L1758.1,750.4 L1757.2,751.4 L1755.8,752.0 L1753.9,752.5 L1751.5,752.7 L1748.6,752.8 L1745.4,752.6 L1741.8,752.2 L1738.6,752.0 L1736.6,752.3 L1734.9,752.7 L1733.7,753.3 L1732.9,754.2 L1732.4,755.1 L1731.9,756.1 L1731.4,757.1 L1731.0,758.1 L1730.8,759.2 L1731.0,760.5 L1731.7,762.1 L1732.7,763.9 L1734.8,766.3 L1737.3,768.9 L1739.4,771.4 L1741.1,773.7 L1742.4,775.7 L1743.2,777.5 L1743.5,779.1 L1743.3,780.4 L1742.3,781.2 L1740.8,781.6 L1738.8,781.8 L1736.4,781.7 L1733.6,781.4 L1730.4,780.8 L1726.9,779.9 L1723.8,779.2 L1721.7,779.2 L1720.0,779.4 L1718.7,779.8 L1717.8,780.6 L1717.2,781.4 L1716.6,782.3 L1715.9,783.2 L1715.4,784.1 L1715.0,785.2 L1715.0,786.6 L1715.5,788.3 L1716.3,790.2 L1718.0,792.9 L1720.1,795.8 L1721.8,798.5 L1723.2,801.0 L1724.1,803.2 L1724.7,805.1 L1724.8,806.7 L1724.4,807.9 L1723.3,808.6 L1721.7,808.9 L1719.8,808.8 L1717.4,808.3 L1714.7,807.6 L1711.6,806.5 L1708.3,805.2 L1705.3,804.1 L1703.2,803.8 L1701.5,803.7 L1700.1,804.0 L1699.2,804.6 L1698.4,805.4 L1697.7,806.2 L1697.0,807.0 L1696.2,807.8 L1695.7,808.8 L1695.6,810.2 L1695.8,811.9 L1696.3,813.9 L1697.7,816.8 L1699.3,820.0 L1700.7,823.0 L1701.6,825.6 L1702.3,827.9 L1702.6,829.9 L1702.4,831.5 L1701.9,832.6 L1700.7,833.1 L1699.1,833.2 L1697.2,832.8 L1694.9,832.1 L1692.3,830.9 L1689.4,829.5 L1686.3,827.7 L1683.5,826.2 L1681.5,825.6 L1679.8,825.3 L1678.4,825.4 L1677.4,825.8 L1676.5,826.5 L1675.7,827.2 L1674.8,827.9 L1674.0,828.6 L1673.4,829.5 L1673.0,830.9 L1673.0,832.6 L1673.2,834.6 L1674.2,837.7 L1675.4,841.1 L1676.3,844.2 L1676.9,847.0 L1677.2,849.3 L1677.2,851.3 L1676.9,852.9 L1676.2,853.9 L1674.9,854.3 L1673.3,854.1 L1671.5,853.5 L1669.3,852.4 L1666.9,850.9 L1664.3,849.1 L1661.4,846.8 L1658.8,845.0 L1656.9,844.1 L1655.3,843.6 L1653.9,843.5 L1652.8,843.8 L1651.9,844.3 L1651.0,844.9 L1650.0,845.5 L1649.1,846.1 L1648.4,846.9 L1647.8,848.2 L1647.6,849.9 L1647.5,852.0 L1648.0,855.1 L1648.7,858.7 L1649.2,861.8 L1649.4,864.7 L1649.4,867.1 L1649.1,869.0 L1648.6,870.5 L1647.7,871.5 L1646.5,871.6 L1644.9,871.2 L1643.1,870.3 L1641.1,869.0 L1639.0,867.2 L1636.6,865.0 L1634.1,862.4 L1631.8,860.2 L1630.0,859.1 L1628.5,858.3 L1627.1,858.0 L1626.0,858.2 L1625.0,858.6 L1624.0,859.0 L1623.0,859.4 L1622.0,859.9 L1621.2,860.6 L1620.5,861.8 L1620.0,863.5 L1619.6,865.5 L1619.7,868.7 L1619.9,872.3 L1619.9,875.5 L1619.7,878.4 L1619.4,880.7 L1618.8,882.7 L1618.1,884.1 L1617.1,884.9 L1615.8,884.9 L1614.4,884.2 L1612.7,883.1 L1610.9,881.5 L1609.0,879.4 L1607.0,876.9 L1604.9,874.0 L1602.9,871.5 L1601.3,870.1 L1599.9,869.2 L1598.6,868.7 L1597.5,868.7 L1596.4,868.9 L1595.4,869.2 L1594.3,869.5 L1593.3,869.8 L1592.3,870.4 L1591.5,871.5 L1590.7,873.1 L1590.1,875.1 L1589.7,878.2 L1589.4,881.8 L1589.0,885.0 L1588.4,887.8 L1587.8,890.1 L1586.9,891.9 L1586.0,893.2 L1584.9,893.9 L1583.7,893.7 L1582.3,892.9 L1580.8,891.5 L1579.3,889.7 L1577.7,887.4 L1576.0,884.6 L1574.3,881.4 L1572.7,878.6 L1571.4,877.1 L1570.1,875.9 L1568.9,875.3 L1567.7,875.1 L1566.7,875.2 L1565.6,875.4 L1564.5,875.5 L1563.4,875.7 L1562.4,876.1 L1561.4,877.1 L1560.5,878.5 L1559.5,880.4 L1558.7,883.5 L1557.9,887.0 L1557.1,890.1 L1556.1,892.8 L1555.1,895.0 L1554.1,896.7 L1553.0,897.8 L1551.8,898.3 L1550.6,898.0 L1549.3,897.0 L1548.1,895.4 L1546.8,893.4 L1545.5,890.9 L1544.3,887.9 L1543.0,884.5 L1541.9,881.5 L1540.7,879.8 L1539.6,878.5 L1538.5,877.7 L1537.4,877.3 L1536.3,877.3 L1535.2,877.3 L1534.1,877.3 L1533.1,877.3 L1532.0,877.6 L1530.9,878.4 L1529.7,879.7 L1528.6,881.4 L1527.3,884.4 L1526.0,887.8 L1524.7,890.7 L1523.5,893.2 L1522.2,895.3 L1520.9,896.8 L1519.6,897.8 L1518.4,898.1 L1517.2,897.6 L1516.1,896.4 L1515.1,894.7 L1514.1,892.5 L1513.2,889.9 L1512.4,886.7 L1511.6,883.2 L1510.9,880.1 L1510.0,878.2 L1509.1,876.8 L1508.1,875.8 L1507.1,875.3 L1506.0,875.1 L1504.9,875.0 L1503.8,874.8 L1502.7,874.7 L1501.6,874.9 L1500.4,875.5 L1499.1,876.6 L1497.7,878.2 L1496.1,880.9 L1494.3,884.1 L1492.7,886.8 L1491.0,889.1 L1489.5,891.0 L1488.0,892.3 L1486.6,893.1 L1485.3,893.2 L1484.3,892.6 L1483.3,891.3 L1482.5,889.4 L1481.9,887.1 L1481.4,884.4 L1481.0,881.2 L1480.7,877.5 L1480.4,874.4 L1479.8,872.4 L1479.1,870.8 L1478.2,869.7 L1477.3,869.1 L1476.2,868.8 L1475.2,868.5 L1474.2,868.2 L1473.1,867.9 L1472.0,867.9 L1470.7,868.3 L1469.2,869.3 L1467.6,870.6 L1465.6,873.1 L1463.5,876.0 L1461.4,878.5 L1459.5,880.5 L1457.7,882.1 L1456.0,883.3 L1454.5,883.8 L1453.3,883.8 L1452.3,883.0 L1451.6,881.6 L1451.0,879.7 L1450.7,877.3 L1450.6,874.5 L1450.6,871.3 L1450.9,867.6 L1451.0,864.5 L1450.7,862.4 L1450.2,860.7 L1449.5,859.6 L1448.7,858.8 L1447.7,858.3 L1446.7,857.9 L1445.7,857.4 L1444.7,857.0 L1443.6,856.9 L1442.2,857.1 L1440.7,857.9 L1438.9,859.0 L1436.6,861.2 L1434.0,863.7 L1431.6,865.9 L1429.4,867.7 L1427.4,869.0 L1425.6,869.9 L1424.1,870.2 L1422.8,870.1 L1422.0,869.1 L1421.5,867.6 L1421.2,865.6 L1421.2,863.2 L1421.5,860.4 L1422.0,857.2 L1422.7,853.7 L1423.3,850.5 L1423.2,848.5 L1423.0,846.8 L1422.5,845.5 L1421.7,844.6 L1420.8,844.0 L1419.9,843.4 L1419.0,842.9 L1418.1,842.3 L1417.0,842.0 L1415.6,842.1 L1414.0,842.6 L1412.1,843.4 L1409.5,845.3 L1406.6,847.5 L1403.9,849.3 L1401.5,850.7 L1399.3,851.8 L1397.4,852.4 L1395.8,852.5 L1394.6,852.2 L1393.9,851.1 L1393.6,849.6 L1393.6,847.6 L1394.0,845.2 L1394.6,842.4 L1395.6,839.4 L1396.8,835.9 L1397.8,832.9 L1398.0,830.9 L1398.0,829.1 L1397.7,827.8 L1397.1,826.8 L1396.3,826.1 L1395.4,825.4 L1394.6,824.7 L1393.8,824.0 L1392.7,823.6 L1391.3,823.5 L1389.6,823.7 L1387.6,824.3 L1384.8,825.8 L1381.7,827.5 L1378.8,829.0 L1376.2,830.1 L1373.9,830.8 L1371.9,831.1 L1370.3,831.1 L1369.2,830.5 L1368.6,829.4 L1368.5,827.8 L1368.8,825.8 L1369.5,823.5 L1370.5,820.9 L1371.9,818.0 L1373.6,814.8 L1375.0,811.9 L1375.5,809.9 L1375.7,808.2 L1375.6,806.8 L1375.1,805.8 L1374.4,805.0 L1373.7,804.1 L1373.0,803.3 L1372.2,802.5 L1371.3,801.9 L1369.9,801.6 L1368.2,801.7 L1366.1,802.0 L1363.1,803.0 L1359.7,804.3 L1356.7,805.4 L1354.0,806.1 L1351.6,806.5 L1349.6,806.5 L1348.0,806.2 L1346.9,805.6 L1346.6,804.4 L1346.7,802.8 L1347.3,800.9 L1348.2,798.7 L1349.6,796.2 L1351.4,793.5 L1353.5,790.6 L1355.3,787.9 L1356.1,786.0 L1356.6,784.3 L1356.6,783.0 L1356.3,781.9 L1355.7,781.0 L1355.1,780.1 L1354.5,779.2 L1353.9,778.3 L1353.0,777.5 L1351.7,777.1 L1350.0,776.9 L1347.9,776.9 L1344.8,777.5 L1341.3,778.3 L1338.1,778.9 L1335.3,779.2 L1332.9,779.3 L1330.9,779.1 L1329.4,778.6 L1328.4,777.7 L1328.2,776.5 L1328.6,774.9 L1329.4,773.1 L1330.7,771.1 L1332.4,768.8 L1334.5,766.4 L1337.0,763.8 L1339.2,761.4 L1340.2,759.7 L1340.9,758.1 L1341.2,756.7 L1341.0,755.6 L1340.5,754.6 L1340.1,753.6 L1339.6,752.7 L1339.1,751.7 L1338.3,750.8 L1337.1,750.2 L1335.5,749.7 L1333.4,749.5 L1330.2,749.6 L1326.6,750.0 L1323.4,750.1 L1320.6,750.0 L1318.2,749.8 L1316.3,749.3 L1314.8,748.6 L1314.0,747.6 L1313.9,746.4 L1314.5,744.9 L1315.6,743.2 L1317.1,741.3 L1319.1,739.4 L1321.6,737.2 L1324.4,735.0 L1326.9,733.0 L1328.2,731.3 L1329.1,729.9 L1329.5,728.6 L1329.5,727.4 L1329.2,726.4 L1328.9,725.4 L1328.5,724.3 L1328.2,723.3 L1327.5,722.4 L1326.4,721.5 L1324.8,720.9 L1322.8,720.3 L1319.7,720.0 L1316.0,719.9 L1312.8,719.5 L1310.1,719.1 L1307.7,718.5 L1305.9,717.7 L1304.6,716.8 L1303.9,715.8 L1304.0,714.5 L1304.8,713.1 L1306.1,711.6 L1307.8,710.0 L1310.1,708.3 L1312.8,706.6 L1316.0,704.8 L1318.7,703.1 L1320.2,701.6 L1321.3,700.3 L1321.9,699.1 L1322.0,698.0 L1321.9,696.9 L1321.7,695.8 L1321.5,694.7 L1321.3,693.7 L1320.8,692.6 L1319.8,691.7 L1318.3,690.8 L1316.4,690.0 L1313.3,689.2 L1309.8,688.6 L1306.6,687.8 L1303.9,687.0 L1301.7,686.1 L1300.0,685.1 L1298.8,684.0 L1298.3,682.8 L1298.6,681.6 L1299.5,680.3 L1301.0,679.0 L1303.0,677.7 L1305.5,676.3 L1308.4,675.0 L1311.8,673.6 L1314.7,672.3 L1316.4,671.1 L1317.7,669.9 L1318.4,668.8 L1318.7,667.7 L1318.7,666.6 L1318.7,665.5 L1318.7,664.5 L1318.6,663.4 L1318.2,662.3 L1317.4,661.2 L1316.1,660.1 L1314.3,659.0 L1311.3,657.9 L1307.9,656.7 L1304.9,655.5 L1302.3,654.3 L1300.3,653.1 L1298.7,651.9 L1297.7,650.6 L1297.3,649.4 L1297.8,648.3 L1298.9,647.1 L1300.6,646.0 L1302.7,645.0 L1305.4,644.0 L1308.5,643.0 L1312.0,642.2 L1315.0,641.3 L1316.9,640.3 L1318.3,639.4 L1319.2,638.4 L1319.7,637.3 L1319.8,636.2 L1319.9,635.2 L1320.1,634.1 L1320.2,633.0 L1320.0,631.9 L1319.3,630.7 L1318.1,629.4 L1316.5,628.1 L1313.7,626.5 L1310.5,624.9 L1307.7,623.3 L1305.3,621.8 L1303.4,620.3 L1302.1,618.8 L1301.2,617.5 L1301.0,616.2 L1301.6,615.1 L1302.9,614.2 L1304.7,613.3 L1307.0,612.6 L1309.8,612.0 L1312.9,611.5 L1316.5,611.1 L1319.7,610.6 L1321.7,609.9 L1323.2,609.2 L1324.3,608.3 L1324.9,607.3 L1325.1,606.3 L1325.4,605.2 L1325.7,604.2 L1325.9,603.1 L1325.9,602.0 L1325.4,600.7 L1324.4,599.3 L1323.0,597.8 L1320.4,595.8 L1317.5,593.8 L1314.9,591.8 L1312.8,589.9 L1311.1,588.2 L1310.0,586.6 L1309.3,585.1 L1309.3,583.9 L1310.1,582.9 L1311.5,582.1 L1313.4,581.5 L1315.7,581.1 L1318.5,580.8 L1321.8,580.8 L1325.4,580.9 L1328.6,580.9 L1330.6,580.5 L1332.3,580.0 L1333.4,579.3 L1334.1,578.4 L1334.6,577.4 L1335.0,576.4 L1335.4,575.4 L1335.8,574.3 L1335.9,573.2 L1335.6,571.9 L1334.8,570.3 L1333.6,568.6 L1331.4,566.4 L1328.7,563.9 L1326.5,561.6 L1324.6,559.5 L1323.2,557.5 L1322.3,555.8 L1321.9,554.2 L1322.0,553.0 L1322.9,552.1 L1324.4,551.5 L1326.4,551.2 L1328.8,551.1 L1331.6,551.3 L1334.8,551.7 L1338.4,552.3 L1341.5,552.7 L1343.6,552.6 L1345.3,552.3 L1346.5,551.8 L1347.4,551.0 L1347.9,550.1 L1348.5,549.1 L1349.0,548.2 L1349.6,547.2 L1349.8,546.1 L1349.7,544.8 L1349.1,543.1 L1348.2,541.3 L1346.3,538.7 L1344.0,535.9 L1342.1,533.3 L1340.6,530.9 L1339.5,528.8 L1338.8,526.9 L1338.6,525.4 L1338.9,524.1 L1339.9,523.4 L1341.5,523.0 L1343.5,523.0 L1345.9,523.2 L1348.6,523.8 L1351.7,524.6 L1355.2,525.7 L1358.2,526.6 L1360.3,526.8 L1362.0,526.7 L1363.4,526.4 L1364.3,525.7 L1365.0,524.9 L1365.7,524.0 L1366.3,523.2 L1367.0,522.3 L1367.4,521.2 L1367.5,519.9 L1367.1,518.2 L1366.5,516.2 L1364.9,513.4 L1363.1,510.3 L1361.5,507.5 L1360.4,504.9 L1359.6,502.6 L1359.1,500.7 L1359.1,499.1 L1359.6,497.9 L1360.7,497.3 L1362.3,497.2 L1364.3,497.4 L1366.6,498.0 L1369.3,498.9 L1372.3,500.2 L1375.5,501.8 L1378.4,503.1 L1380.5,503.5 L1382.2,503.7 L1383.5,503.5 L1384.6,503.0 L1385.4,502.3 L1386.2,501.5 L1386.9,500.8 L1387.7,500.0 L1388.3,499.0 L1388.5,497.7 L1388.4,496.0 L1388.1,493.9 L1386.9,490.9 L1385.5,487.6 L1384.4,484.6 L1383.6,481.9 L1383.1,479.5 L1382.9,477.5 L1383.2,476.0 L1383.8,474.9 L1385.0,474.4 L1386.6,474.5 L1388.5,475.0 L1390.8,475.9 L1393.3,477.2 L1396.0,478.9 L1399.0,480.9 L1401.7,482.6 L1403.7,483.3 L1405.3,483.7 L1406.7,483.8 L1407.8,483.4 L1408.7,482.8 L1409.6,482.1 L1410.5,481.5 L1411.3,480.8 L1412.0,479.9 L1412.5,478.6 L1412.6,476.9 L1412.5,474.8 L1411.8,471.8 L1410.8,468.3 L1410.2,465.1 L1409.7,462.3 L1409.6,459.9 L1409.7,457.9 L1410.2,456.4 L1411.0,455.4 L1412.2,455.1 L1413.8,455.4 L1415.6,456.2 L1417.7,457.4 L1420.0,459.0 L1422.5,461.1 L1425.2,463.5 L1427.6,465.5 L1429.5,466.5 L1431.1,467.2 L1432.4,467.4 L1433.5,467.2 L1434.5,466.7 L1435.5,466.2 L1436.4,465.7 L1437.4,465.2 L1438.2,464.4 L1438.8,463.1 L1439.2,461.4 L1439.4,459.4 L1439.1,456.2 L1438.7,452.6 L1438.4,449.4 L1438.4,446.6 L1438.6,444.2 L1439.0,442.2 L1439.6,440.8 L1440.6,439.9 L1441.8,439.8 L1443.3,440.3 L1445.1,441.3 L1446.9,442.8 L1449.0,444.8 L1451.2,447.1 L1453.5,449.9 L1455.7,452.3 L1457.3,453.5 L1458.8,454.4 L1460.1,454.8 L1461.3,454.7 L1462.3,454.4 L1463.3,454.0 L1464.4,453.6 L1465.4,453.2 L1466.3,452.6 L1467.1,451.4 L1467.7,449.8 L1468.2,447.8 L1468.3,444.6 L1468.4,441.0 L1468.6,437.8 L1468.9,435.0 L1469.5,432.6 L1470.2,430.8 L1471.0,429.4 L1472.0,428.7 L1473.3,428.8 L1474.7,429.5 L1476.3,430.7 L1477.9,432.5 L1479.7,434.7 L1481.6,437.3 L1483.5,440.4 L1485.3,443.0 L1486.7,444.5 L1488.1,445.5 L1489.3,446.1 L1490.5,446.2 L1491.6,446.0 L1492.6,445.8 L1493.7,445.6 L1494.7,445.3 L1495.7,444.8 L1496.7,443.8 L1497.5,442.3 L1498.3,440.3 L1498.9,437.2 L1499.4,433.6 L1500.1,430.5 L1500.8,427.7 L1501.7,425.5 L1502.6,423.7 L1503.6,422.5 L1504.8,421.9 L1506.0,422.2 L1507.3,423.1 L1508.7,424.6 L1510.1,426.5 L1511.5,428.9 L1513.0,431.8 L1514.5,435.1 L1515.9,438.0 L1517.1,439.6 L1518.3,440.9 L1519.5,441.6 L1520.6,441.9 L1521.7,441.8Z M1330.1,659.3 a206.5,206.5 0 1,0 413.0,0 a206.5,206.5 0 1,0 -413.0,0Z" fill="#b22222" fill-rule="evenodd"/>
<circle cx="1449.3" cy="586.0" r="95.2" fill="none" stroke="#b22222" stroke-width="12.3"/>
<circle cx="1643.7" cy="620.3" r="95.2" fill="none" stroke="#b22222" stroke-width="12.3"/>
<circle cx="1516.8" cy="771.6" r="95.2" fill="none" stroke="#b22222" stroke-width="12.3"/>
<circle cx="1536.6" cy="659.3" r="16.0" fill="#b22222"/>
<circle cx="1541.3" cy="629.4" r="9" fill="#b22222"/>
<circle cx="1560.1" cy="678.4" r="9" fill="#b22222"/>
<circle cx="1508.3" cy="670.2" r="9" fill="#b22222"/>
<path d="M1339.0,1065.0 L1337.9,1065.1 L1336.8,1065.2 L1335.7,1065.6 L1334.6,1066.4 L1333.6,1067.8 L1332.5,1069.5 L1331.5,1072.5 L1330.5,1075.9 L1329.4,1078.8 L1328.3,1081.4 L1327.1,1083.5 L1326.0,1085.0 L1324.8,1086.1 L1323.6,1086.5 L1322.4,1086.1 L1321.2,1085.0 L1320.1,1083.5 L1318.9,1081.4 L1317.8,1078.8 L1316.7,1075.9 L1315.7,1072.5 L1314.7,1069.5 L1313.6,1067.8 L1312.6,1066.4 L1311.5,1065.6 L1310.4,1065.2 L1309.3,1065.1 L1308.2,1065.0 L1307.1,1064.9 L1306.0,1064.9 L1304.9,1065.1 L1303.7,1065.8 L1302.5,1067.0 L1301.3,1068.6 L1299.9,1071.4 L1298.4,1074.7 L1296.9,1077.5 L1295.5,1079.8 L1294.1,1081.8 L1292.7,1083.2 L1291.4,1084.0 L1290.2,1084.3 L1289.1,1083.7 L1288.0,1082.5 L1287.1,1080.8 L1286.2,1078.6 L1285.4,1076.0 L1284.7,1072.9 L1284.2,1069.4 L1283.5,1066.3 L1282.7,1064.4 L1281.9,1063.0 L1280.9,1062.0 L1279.9,1061.4 L1278.8,1061.2 L1277.8,1061.0 L1276.7,1060.8 L1275.6,1060.6 L1274.5,1060.7 L1273.2,1061.2 L1271.8,1062.3 L1270.4,1063.7 L1268.6,1066.3 L1266.7,1069.3 L1264.9,1071.9 L1263.2,1074.0 L1261.6,1075.8 L1260.0,1077.0 L1258.6,1077.7 L1257.3,1077.8 L1256.3,1077.1 L1255.4,1075.7 L1254.7,1073.9 L1254.1,1071.6 L1253.7,1068.9 L1253.4,1065.7 L1253.3,1062.2 L1253.1,1059.1 L1252.5,1057.1 L1251.9,1055.5 L1251.1,1054.4 L1250.1,1053.8 L1249.1,1053.4 L1248.1,1053.0 L1247.0,1052.7 L1246.0,1052.3 L1244.8,1052.3 L1243.5,1052.7 L1242.0,1053.5 L1240.4,1054.8 L1238.3,1057.1 L1236.1,1059.8 L1233.9,1062.2 L1231.9,1064.1 L1230.1,1065.6 L1228.4,1066.6 L1226.9,1067.1 L1225.6,1067.0 L1224.7,1066.2 L1224.0,1064.7 L1223.5,1062.8 L1223.3,1060.5 L1223.2,1057.7 L1223.3,1054.6 L1223.7,1051.0 L1223.9,1047.9 L1223.6,1045.9 L1223.1,1044.2 L1222.5,1043.0 L1221.6,1042.3 L1220.6,1041.7 L1219.7,1041.3 L1218.7,1040.8 L1217.7,1040.3 L1216.6,1040.1 L1215.2,1040.3 L1213.6,1041.0 L1211.8,1042.0 L1209.5,1044.0 L1206.9,1046.4 L1204.5,1048.5 L1202.2,1050.1 L1200.2,1051.3 L1198.4,1052.1 L1196.8,1052.4 L1195.6,1052.2 L1194.8,1051.2 L1194.3,1049.7 L1194.1,1047.8 L1194.1,1045.4 L1194.4,1042.7 L1195.0,1039.6 L1195.8,1036.1 L1196.3,1033.0 L1196.3,1031.0 L1196.1,1029.3 L1195.6,1028.0 L1194.9,1027.1 L1194.0,1026.5 L1193.0,1025.9 L1192.1,1025.3 L1191.2,1024.7 L1190.1,1024.3 L1188.7,1024.4 L1187.1,1024.8 L1185.2,1025.6 L1182.6,1027.3 L1179.7,1029.4 L1177.0,1031.1 L1174.6,1032.4 L1172.4,1033.3 L1170.5,1033.9 L1169.0,1034.0 L1167.8,1033.6 L1167.1,1032.5 L1166.8,1031.0 L1166.8,1029.0 L1167.2,1026.7 L1167.8,1024.0 L1168.8,1021.0 L1170.0,1017.6 L1171.0,1014.7 L1171.2,1012.7 L1171.2,1010.9 L1170.9,1009.6 L1170.3,1008.6 L1169.5,1007.9 L1168.7,1007.2 L1167.8,1006.5 L1167.0,1005.7 L1165.9,1005.3 L1164.6,1005.1 L1162.9,1005.3 L1160.9,1005.8 L1158.1,1007.2 L1155.0,1008.9 L1152.1,1010.2 L1149.5,1011.2 L1147.2,1011.9 L1145.3,1012.2 L1143.7,1012.1 L1142.6,1011.5 L1142.0,1010.4 L1141.9,1008.8 L1142.2,1006.9 L1142.9,1004.6 L1143.9,1002.0 L1145.2,999.1 L1146.9,996.0 L1148.3,993.2 L1148.8,991.2 L1149.0,989.5 L1148.8,988.2 L1148.4,987.1 L1147.6,986.3 L1146.9,985.4 L1146.2,984.6 L1145.5,983.8 L1144.5,983.2 L1143.2,982.9 L1141.4,982.9 L1139.4,983.1 L1136.5,984.1 L1133.1,985.3 L1130.1,986.3 L1127.4,986.9 L1125.1,987.3 L1123.1,987.3 L1121.6,987.0 L1120.5,986.3 L1120.1,985.1 L1120.2,983.6 L1120.8,981.7 L1121.7,979.5 L1123.0,977.1 L1124.7,974.4 L1126.8,971.5 L1128.5,968.9 L1129.3,967.0 L1129.7,965.4 L1129.8,964.0 L1129.4,962.9 L1128.8,962.0 L1128.2,961.1 L1127.6,960.1 L1127.0,959.2 L1126.1,958.5 L1124.8,958.0 L1123.1,957.8 L1121.1,957.8 L1118.0,958.3 L1114.5,959.1 L1111.4,959.7 L1108.7,960.0 L1106.3,960.0 L1104.4,959.8 L1102.9,959.3 L1101.9,958.5 L1101.7,957.3 L1102.0,955.7 L1102.8,953.9 L1104.0,951.9 L1105.6,949.6 L1107.7,947.2 L1110.1,944.6 L1112.1,942.3 L1113.1,940.5 L1113.8,938.9 L1114.0,937.5 L1113.8,936.4 L1113.3,935.4 L1112.8,934.4 L1112.4,933.5 L1111.8,932.5 L1111.1,931.6 L1109.9,931.0 L1108.2,930.5 L1106.2,930.2 L1103.1,930.4 L1099.5,930.8 L1096.4,930.9 L1093.6,930.8 L1091.3,930.6 L1089.4,930.1 L1087.9,929.4 L1087.1,928.5 L1087.0,927.2 L1087.5,925.7 L1088.5,924.0 L1090.0,922.2 L1091.9,920.2 L1094.3,918.0 L1097.0,915.8 L1099.3,913.7 L1100.6,912.1 L1101.4,910.6 L1101.8,909.3 L1101.8,908.1 L1101.4,907.1 L1101.1,906.0 L1100.7,905.0 L1100.3,904.0 L1099.7,903.0 L1098.6,902.2 L1097.0,901.6 L1095.0,901.0 L1091.9,900.8 L1088.4,900.7 L1085.2,900.4 L1082.5,900.0 L1080.2,899.4 L1078.4,898.7 L1077.0,897.8 L1076.3,896.8 L1076.4,895.5 L1077.1,894.1 L1078.3,892.5 L1080.1,890.9 L1082.2,889.2 L1084.8,887.4 L1087.8,885.5 L1090.4,883.7 L1091.8,882.3 L1092.9,880.9 L1093.4,879.6 L1093.5,878.5 L1093.3,877.4 L1093.1,876.3 L1092.9,875.3 L1092.7,874.2 L1092.1,873.2 L1091.1,872.2 L1089.7,871.4 L1087.8,870.6 L1084.7,869.9 L1081.2,869.4 L1078.1,868.7 L1075.5,867.9 L1073.3,867.0 L1071.6,866.1 L1070.4,865.0 L1069.8,863.9 L1070.1,862.7 L1070.9,861.4 L1072.3,860.0 L1074.3,858.6 L1076.6,857.2 L1079.4,855.7 L1082.7,854.2 L1085.5,852.8 L1087.1,851.6 L1088.3,850.4 L1089.0,849.2 L1089.2,848.1 L1089.2,847.0 L1089.1,845.9 L1089.0,844.8 L1088.9,843.7 L1088.5,842.6 L1087.7,841.5 L1086.3,840.5 L1084.6,839.4 L1081.6,838.4 L1078.2,837.4 L1075.3,836.3 L1072.7,835.2 L1070.6,834.0 L1069.1,832.9 L1068.0,831.7 L1067.6,830.5 L1068.0,829.3 L1069.1,828.1 L1070.6,827.0 L1072.7,825.8 L1075.3,824.7 L1078.2,823.6 L1081.6,822.6 L1084.6,821.6 L1086.3,820.5 L1087.7,819.5 L1088.5,818.4 L1088.9,817.3 L1089.0,816.2 L1089.1,815.1 L1089.2,814.0 L1089.2,812.9 L1089.0,811.8 L1088.3,810.6 L1087.1,809.4 L1085.5,808.2 L1082.7,806.8 L1079.4,805.3 L1076.6,803.8 L1074.3,802.4 L1072.3,801.0 L1070.9,799.6 L1070.1,798.3 L1069.8,797.1 L1070.4,796.0 L1071.6,794.9 L1073.3,794.0 L1075.5,793.1 L1078.1,792.3 L1081.2,791.6 L1084.7,791.1 L1087.8,790.4 L1089.7,789.6 L1091.1,788.8 L1092.1,787.8 L1092.7,786.8 L1092.9,785.7 L1093.1,784.7 L1093.3,783.6 L1093.5,782.5 L1093.4,781.4 L1092.9,780.1 L1091.8,778.7 L1090.4,777.3 L1087.8,775.5 L1084.8,773.6 L1082.2,771.8 L1080.1,770.1 L1078.3,768.5 L1077.1,766.9 L1076.4,765.5 L1076.3,764.2 L1077.0,763.2 L1078.4,762.3 L1080.2,761.6 L1082.5,761.0 L1085.2,760.6 L1088.4,760.3 L1091.9,760.2 L1095.0,760.0 L1097.0,759.4 L1098.6,758.8 L1099.7,758.0 L1100.3,757.0 L1100.7,756.0 L1101.1,755.0 L1101.4,753.9 L1101.8,752.9 L1101.8,751.7 L1101.4,750.4 L1100.6,748.9 L1099.3,747.3 L1097.0,745.2 L1094.3,743.0 L1091.9,740.8 L1090.0,738.8 L1088.5,737.0 L1087.5,735.3 L1087.0,733.8 L1087.1,732.5 L1087.9,731.6 L1089.4,730.9 L1091.3,730.4 L1093.6,730.2 L1096.4,730.1 L1099.5,730.2 L1103.1,730.6 L1106.2,730.8 L1108.2,730.5 L1109.9,730.0 L1111.1,729.4 L1111.8,728.5 L1112.4,727.5 L1112.8,726.6 L1113.3,725.6 L1113.8,724.6 L1114.0,723.5 L1113.8,722.1 L1113.1,720.5 L1112.1,718.7 L1110.1,716.4 L1107.7,713.8 L1105.6,711.4 L1104.0,709.1 L1102.8,707.1 L1102.0,705.3 L1101.7,703.7 L1101.9,702.5 L1102.9,701.7 L1104.4,701.2 L1106.3,701.0 L1108.7,701.0 L1111.4,701.3 L1114.5,701.9 L1118.0,702.7 L1121.1,703.2 L1123.1,703.2 L1124.8,703.0 L1126.1,702.5 L1127.0,701.8 L1127.6,700.9 L1128.2,699.9 L1128.8,699.0 L1129.4,698.1 L1129.8,697.0 L1129.7,695.6 L1129.3,694.0 L1128.5,692.1 L1126.8,689.5 L1124.7,686.6 L1123.0,683.9 L1121.7,681.5 L1120.8,679.3 L1120.2,677.4 L1120.1,675.9 L1120.5,674.7 L1121.6,674.0 L1123.1,673.7 L1125.1,673.7 L1127.4,674.1 L1130.1,674.7 L1133.1,675.7 L1136.5,676.9 L1139.4,677.9 L1141.4,678.1 L1143.2,678.1 L1144.5,677.8 L1145.5,677.2 L1146.2,676.4 L1146.9,675.6 L1147.6,674.7 L1148.4,673.9 L1148.8,672.8 L1149.0,671.5 L1148.8,669.8 L1148.3,667.8 L1146.9,665.0 L1145.2,661.9 L1143.9,659.0 L1142.9,656.4 L1142.2,654.1 L1141.9,652.2 L1142.0,650.6 L1142.6,649.5 L1143.7,648.9 L1145.3,648.8 L1147.2,649.1 L1149.5,649.8 L1152.1,650.8 L1155.0,652.1 L1158.1,653.8 L1160.9,655.2 L1162.9,655.7 L1164.6,655.9 L1165.9,655.7 L1167.0,655.3 L1167.8,654.5 L1168.7,653.8 L1169.5,653.1 L1170.3,652.4 L1170.9,651.4 L1171.2,650.1 L1171.2,648.3 L1171.0,646.3 L1170.0,643.4 L1168.8,640.0 L1167.8,637.0 L1167.2,634.3 L1166.8,632.0 L1166.8,630.0 L1167.1,628.5 L1167.8,627.4 L1169.0,627.0 L1170.5,627.1 L1172.4,627.7 L1174.6,628.6 L1177.0,629.9 L1179.7,631.6 L1182.6,633.7 L1185.2,635.4 L1187.1,636.2 L1188.7,636.6 L1190.1,636.7 L1191.2,636.3 L1192.1,635.7 L1193.0,635.1 L1194.0,634.5 L1194.9,633.9 L1195.6,633.0 L1196.1,631.7 L1196.3,630.0 L1196.3,628.0 L1195.8,624.9 L1195.0,621.4 L1194.4,618.3 L1194.1,615.6 L1194.1,613.2 L1194.3,611.3 L1194.8,609.8 L1195.6,608.8 L1196.8,608.6 L1198.4,608.9 L1200.2,609.7 L1202.2,610.9 L1204.5,612.5 L1206.9,614.6 L1209.5,617.0 L1211.8,619.0 L1213.6,620.0 L1215.2,620.7 L1216.6,620.9 L1217.7,620.7 L1218.7,620.2 L1219.7,619.7 L1220.6,619.3 L1221.6,618.7 L1222.5,618.0 L1223.1,616.8 L1223.6,615.1 L1223.9,613.1 L1223.7,610.0 L1223.3,606.4 L1223.2,603.3 L1223.3,600.5 L1223.5,598.2 L1224.0,596.3 L1224.7,594.8 L1225.6,594.0 L1226.9,593.9 L1228.4,594.4 L1230.1,595.4 L1231.9,596.9 L1233.9,598.8 L1236.1,601.2 L1238.3,603.9 L1240.4,606.2 L1242.0,607.5 L1243.5,608.3 L1244.8,608.7 L1246.0,608.7 L1247.0,608.3 L1248.1,608.0 L1249.1,607.6 L1250.1,607.2 L1251.1,606.6 L1251.9,605.5 L1252.5,603.9 L1253.1,601.9 L1253.3,598.8 L1253.4,595.3 L1253.7,592.1 L1254.1,589.4 L1254.7,587.1 L1255.4,585.3 L1256.3,583.9 L1257.3,583.2 L1258.6,583.3 L1260.0,584.0 L1261.6,585.2 L1263.2,587.0 L1264.9,589.1 L1266.7,591.7 L1268.6,594.7 L1270.4,597.3 L1271.8,598.7 L1273.2,599.8 L1274.5,600.3 L1275.6,600.4 L1276.7,600.2 L1277.8,600.0 L1278.8,599.8 L1279.9,599.6 L1280.9,599.0 L1281.9,598.0 L1282.7,596.6 L1283.5,594.7 L1284.2,591.6 L1284.7,588.1 L1285.4,585.0 L1286.2,582.4 L1287.1,580.2 L1288.0,578.5 L1289.1,577.3 L1290.2,576.7 L1291.4,577.0 L1292.7,577.8 L1294.1,579.2 L1295.5,581.2 L1296.9,583.5 L1298.4,586.3 L1299.9,589.6 L1301.3,592.4 L1302.5,594.0 L1303.7,595.2 L1304.9,595.9 L1306.0,596.1 L1307.1,596.1 L1308.2,596.0 L1309.3,595.9 L1310.4,595.8 L1311.5,595.4 L1312.6,594.6 L1313.6,593.2 L1314.7,591.5 L1315.7,588.5 L1316.7,585.1 L1317.8,582.2 L1318.9,579.6 L1320.1,577.5 L1321.2,576.0 L1322.4,574.9 L1323.6,574.5 L1324.8,574.9 L1326.0,576.0 L1327.1,577.5 L1328.3,579.6 L1329.4,582.2 L1330.5,585.1 L1331.5,588.5 L1332.5,591.5 L1333.6,593.2 L1334.6,594.6 L1335.7,595.4 L1336.8,595.8 L1337.9,595.9 L1339.0,596.0 L1340.1,596.1 L1341.2,596.1 L1342.3,595.9 L1343.5,595.2 L1344.7,594.0 L1345.9,592.4 L1347.3,589.6 L1348.8,586.3 L1350.3,583.5 L1351.7,581.2 L1353.1,579.2 L1354.5,577.8 L1355.8,577.0 L1357.0,576.7 L1358.1,577.3 L1359.2,578.5 L1360.1,580.2 L1361.0,582.4 L1361.8,585.0 L1362.5,588.1 L1363.0,591.6 L1363.7,594.7 L1364.5,596.6 L1365.3,598.0 L1366.3,599.0 L1367.3,599.6 L1368.4,599.8 L1369.4,600.0 L1370.5,600.2 L1371.6,600.4 L1372.7,600.3 L1374.0,599.8 L1375.4,598.7 L1376.8,597.3 L1378.6,594.7 L1380.5,591.7 L1382.3,589.1 L1384.0,587.0 L1385.6,585.2 L1387.2,584.0 L1388.6,583.3 L1389.9,583.2 L1390.9,583.9 L1391.8,585.3 L1392.5,587.1 L1393.1,589.4 L1393.5,592.1 L1393.8,595.3 L1393.9,598.8 L1394.1,601.9 L1394.7,603.9 L1395.3,605.5 L1396.1,606.6 L1397.1,607.2 L1398.1,607.6 L1399.1,608.0 L1400.2,608.3 L1401.2,608.7 L1402.4,608.7 L1403.7,608.3 L1405.2,607.5 L1406.8,606.2 L1408.9,603.9 L1411.1,601.2 L1413.3,598.8 L1415.3,596.9 L1417.1,595.4 L1418.8,594.4 L1420.3,593.9 L1421.6,594.0 L1422.5,594.8 L1423.2,596.3 L1423.7,598.2 L1423.9,600.5 L1424.0,603.3 L1423.9,606.4 L1423.5,610.0 L1423.3,613.1 L1423.6,615.1 L1424.1,616.8 L1424.7,618.0 L1425.6,618.7 L1426.6,619.3 L1427.5,619.7 L1428.5,620.2 L1429.5,620.7 L1430.6,620.9 L1432.0,620.7 L1433.6,620.0 L1435.4,619.0 L1437.7,617.0 L1440.3,614.6 L1442.7,612.5 L1445.0,610.9 L1447.0,609.7 L1448.8,608.9 L1450.4,608.6 L1451.6,608.8 L1452.4,609.8 L1452.9,611.3 L1453.1,613.2 L1453.1,615.6 L1452.8,618.3 L1452.2,621.4 L1451.4,624.9 L1450.9,628.0 L1450.9,630.0 L1451.1,631.7 L1451.6,633.0 L1452.3,633.9 L1453.2,634.5 L1454.2,635.1 L1455.1,635.7 L1456.0,636.3 L1457.1,636.7 L1458.5,636.6 L1460.1,636.2 L1462.0,635.4 L1464.6,633.7 L1467.5,631.6 L1470.2,629.9 L1472.6,628.6 L1474.8,627.7 L1476.7,627.1 L1478.2,627.0 L1479.4,627.4 L1480.1,628.5 L1480.4,630.0 L1480.4,632.0 L1480.0,634.3 L1479.4,637.0 L1478.4,640.0 L1477.2,643.4 L1476.2,646.3 L1476.0,648.3 L1476.0,650.1 L1476.3,651.4 L1476.9,652.4 L1477.7,653.1 L1478.5,653.8 L1479.4,654.5 L1480.2,655.3 L1481.3,655.7 L1482.6,655.9 L1484.3,655.7 L1486.3,655.2 L1489.1,653.8 L1492.2,652.1 L1495.1,650.8 L1497.7,649.8 L1500.0,649.1 L1501.9,648.8 L1503.5,648.9 L1504.6,649.5 L1505.2,650.6 L1505.3,652.2 L1505.0,654.1 L1504.3,656.4 L1503.3,659.0 L1502.0,661.9 L1500.3,665.0 L1498.9,667.8 L1498.4,669.8 L1498.2,671.5 L1498.4,672.8 L1498.8,673.9 L1499.6,674.7 L1500.3,675.6 L1501.0,676.4 L1501.7,677.2 L1502.7,677.8 L1504.0,678.1 L1505.8,678.1 L1507.8,677.9 L1510.7,676.9 L1514.1,675.7 L1517.1,674.7 L1519.8,674.1 L1522.1,673.7 L1524.1,673.7 L1525.6,674.0 L1526.7,674.7 L1527.1,675.9 L1527.0,677.4 L1526.4,679.3 L1525.5,681.5 L1524.2,683.9 L1522.5,686.6 L1520.4,689.5 L1518.7,692.1 L1517.9,694.0 L1517.5,695.6 L1517.4,697.0 L1517.8,698.1 L1518.4,699.0 L1519.0,699.9 L1519.6,700.9 L1520.2,701.8 L1521.1,702.5 L1522.4,703.0 L1524.1,703.2 L1526.1,703.2 L1529.2,702.7 L1532.7,701.9 L1535.8,701.3 L1538.5,701.0 L1540.9,701.0 L1542.8,701.2 L1544.3,701.7 L1545.3,702.5 L1545.5,703.7 L1545.2,705.3 L1544.4,707.1 L1543.2,709.1 L1541.6,711.4 L1539.5,713.8 L1537.1,716.4 L1535.1,718.7 L1534.1,720.5 L1533.4,722.1 L1533.2,723.5 L1533.4,724.6 L1533.9,725.6 L1534.4,726.6 L1534.8,727.5 L1535.4,728.5 L1536.1,729.4 L1537.3,730.0 L1539.0,730.5 L1541.0,730.8 L1544.1,730.6 L1547.7,730.2 L1550.8,730.1 L1553.6,730.2 L1555.9,730.4 L1557.8,730.9 L1559.3,731.6 L1560.1,732.5 L1560.2,733.8 L1559.7,735.3 L1558.7,737.0 L1557.2,738.8 L1555.3,740.8 L1552.9,743.0 L1550.2,745.2 L1547.9,747.3 L1546.6,748.9 L1545.8,750.4 L1545.4,751.7 L1545.4,752.9 L1545.8,753.9 L1546.1,755.0 L1546.5,756.0 L1546.9,757.0 L1547.5,758.0 L1548.6,758.8 L1550.2,759.4 L1552.2,760.0 L1555.3,760.2 L1558.8,760.3 L1562.0,760.6 L1564.7,761.0 L1567.0,761.6 L1568.8,762.3 L1570.2,763.2 L1570.9,764.2 L1570.8,765.5 L1570.1,766.9 L1568.9,768.5 L1567.1,770.1 L1565.0,771.8 L1562.4,773.6 L1559.4,775.5 L1556.8,777.3 L1555.4,778.7 L1554.3,780.1 L1553.8,781.4 L1553.7,782.5 L1553.9,783.6 L1554.1,784.7 L1554.3,785.7 L1554.5,786.8 L1555.1,787.8 L1556.1,788.8 L1557.5,789.6 L1559.4,790.4 L1562.5,791.1 L1566.0,791.6 L1569.1,792.3 L1571.7,793.1 L1573.9,794.0 L1575.6,794.9 L1576.8,796.0 L1577.4,797.1 L1577.1,798.3 L1576.3,799.6 L1574.9,801.0 L1572.9,802.4 L1570.6,803.8 L1567.8,805.3 L1564.5,806.8 L1561.7,808.2 L1560.1,809.4 L1558.9,810.6 L1558.2,811.8 L1558.0,812.9 L1558.0,814.0 L1558.1,815.1 L1558.2,816.2 L1558.3,817.3 L1558.7,818.4 L1559.5,819.5 L1560.9,820.5 L1562.6,821.6 L1565.6,822.6 L1569.0,823.6 L1571.9,824.7 L1574.5,825.8 L1576.6,827.0 L1578.1,828.1 L1579.2,829.3 L1579.6,830.5 L1579.2,831.7 L1578.1,832.9 L1576.6,834.0 L1574.5,835.2 L1571.9,836.3 L1569.0,837.4 L1565.6,838.4 L1562.6,839.4 L1560.9,840.5 L1559.5,841.5 L1558.7,842.6 L1558.3,843.7 L1558.2,844.8 L1558.1,845.9 L1558.0,847.0 L1558.0,848.1 L1558.2,849.2 L1558.9,850.4 L1560.1,851.6 L1561.7,852.8 L1564.5,854.2 L1567.8,855.7 L1570.6,857.2 L1572.9,858.6 L1574.9,860.0 L1576.3,861.4 L1577.1,862.7 L1577.4,863.9 L1576.8,865.0 L1575.6,866.1 L1573.9,867.0 L1571.7,867.9 L1569.1,868.7 L1566.0,869.4 L1562.5,869.9 L1559.4,870.6 L1557.5,871.4 L1556.1,872.2 L1555.1,873.2 L1554.5,874.2 L1554.3,875.3 L1554.1,876.3 L1553.9,877.4 L1553.7,878.5 L1553.8,879.6 L1554.3,880.9 L1555.4,882.3 L1556.8,883.7 L1559.4,885.5 L1562.4,887.4 L1565.0,889.2 L1567.1,890.9 L1568.9,892.5 L1570.1,894.1 L1570.8,895.5 L1570.9,896.8 L1570.2,897.8 L1568.8,898.7 L1567.0,899.4 L1564.7,900.0 L1562.0,900.4 L1558.8,900.7 L1555.3,900.8 L1552.2,901.0 L1550.2,901.6 L1548.6,902.2 L1547.5,903.0 L1546.9,904.0 L1546.5,905.0 L1546.1,906.0 L1545.8,907.1 L1545.4,908.1 L1545.4,909.3 L1545.8,910.6 L1546.6,912.1 L1547.9,913.7 L1550.2,915.8 L1552.9,918.0 L1555.3,920.2 L1557.2,922.2 L1558.7,924.0 L1559.7,925.7 L1560.2,927.2 L1560.1,928.5 L1559.3,929.4 L1557.8,930.1 L1555.9,930.6 L1553.6,930.8 L1550.8,930.9 L1547.7,930.8 L1544.1,930.4 L1541.0,930.2 L1539.0,930.5 L1537.3,931.0 L1536.1,931.6 L1535.4,932.5 L1534.8,933.5 L1534.4,934.4 L1533.9,935.4 L1533.4,936.4 L1533.2,937.5 L1533.4,938.9 L1534.1,940.5 L1535.1,942.3 L1537.1,944.6 L1539.5,947.2 L1541.6,949.6 L1543.2,951.9 L1544.4,953.9 L1545.2,955.7 L1545.5,957.3 L1545.3,958.5 L1544.3,959.3 L1542.8,959.8 L1540.9,960.0 L1538.5,960.0 L1535.8,959.7 L1532.7,959.1 L1529.2,958.3 L1526.1,957.8 L1524.1,957.8 L1522.4,958.0 L1521.1,958.5 L1520.2,959.2 L1519.6,960.1 L1519.0,961.1 L1518.4,962.0 L1517.8,962.9 L1517.4,964.0 L1517.5,965.4 L1517.9,967.0 L1518.7,968.9 L1520.4,971.5 L1522.5,974.4 L1524.2,977.1 L1525.5,979.5 L1526.4,981.7 L1527.0,983.6 L1527.1,985.1 L1526.7,986.3 L1525.6,987.0 L1524.1,987.3 L1522.1,987.3 L1519.8,986.9 L1517.1,986.3 L1514.1,985.3 L1510.7,984.1 L1507.8,983.1 L1505.8,982.9 L1504.0,982.9 L1502.7,983.2 L1501.7,983.8 L1501.0,984.6 L1500.3,985.4 L1499.6,986.3 L1498.8,987.1 L1498.4,988.2 L1498.2,989.5 L1498.4,991.2 L1498.9,993.2 L1500.3,996.0 L1502.0,999.1 L1503.3,1002.0 L1504.3,1004.6 L1505.0,1006.9 L1505.3,1008.8 L1505.2,1010.4 L1504.6,1011.5 L1503.5,1012.1 L1501.9,1012.2 L1500.0,1011.9 L1497.7,1011.2 L1495.1,1010.2 L1492.2,1008.9 L1489.1,1007.2 L1486.3,1005.8 L1484.3,1005.3 L1482.6,1005.1 L1481.3,1005.3 L1480.2,1005.7 L1479.4,1006.5 L1478.5,1007.2 L1477.7,1007.9 L1476.9,1008.6 L1476.3,1009.6 L1476.0,1010.9 L1476.0,1012.7 L1476.2,1014.7 L1477.2,1017.6 L1478.4,1021.0 L1479.4,1024.0 L1480.0,1026.7 L1480.4,1029.0 L1480.4,1031.0 L1480.1,1032.5 L1479.4,1033.6 L1478.2,1034.0 L1476.7,1033.9 L1474.8,1033.3 L1472.6,1032.4 L1470.2,1031.1 L1467.5,1029.4 L1464.6,1027.3 L1462.0,1025.6 L1460.1,1024.8 L1458.5,1024.4 L1457.1,1024.3 L1456.0,1024.7 L1455.1,1025.3 L1454.2,1025.9 L1453.2,1026.5 L1452.3,1027.1 L1451.6,1028.0 L1451.1,1029.3 L1450.9,1031.0 L1450.9,1033.0 L1451.4,1036.1 L1452.2,1039.6 L1452.8,1042.7 L1453.1,1045.4 L1453.1,1047.8 L1452.9,1049.7 L1452.4,1051.2 L1451.6,1052.2 L1450.4,1052.4 L1448.8,1052.1 L1447.0,1051.3 L1445.0,1050.1 L1442.7,1048.5 L1440.3,1046.4 L1437.7,1044.0 L1435.4,1042.0 L1433.6,1041.0 L1432.0,1040.3 L1430.6,1040.1 L1429.5,1040.3 L1428.5,1040.8 L1427.5,1041.3 L1426.6,1041.7 L1425.6,1042.3 L1424.7,1043.0 L1424.1,1044.2 L1423.6,1045.9 L1423.3,1047.9 L1423.5,1051.0 L1423.9,1054.6 L1424.0,1057.7 L1423.9,1060.5 L1423.7,1062.8 L1423.2,1064.7 L1422.5,1066.2 L1421.6,1067.0 L1420.3,1067.1 L1418.8,1066.6 L1417.1,1065.6 L1415.3,1064.1 L1413.3,1062.2 L1411.1,1059.8 L1408.9,1057.1 L1406.8,1054.8 L1405.2,1053.5 L1403.7,1052.7 L1402.4,1052.3 L1401.2,1052.3 L1400.2,1052.7 L1399.1,1053.0 L1398.1,1053.4 L1397.1,1053.8 L1396.1,1054.4 L1395.3,1055.5 L1394.7,1057.1 L1394.1,1059.1 L1393.9,1062.2 L1393.8,1065.7 L1393.5,1068.9 L1393.1,1071.6 L1392.5,1073.9 L1391.8,1075.7 L1390.9,1077.1 L1389.9,1077.8 L1388.6,1077.7 L1387.2,1077.0 L1385.6,1075.8 L1384.0,1074.0 L1382.3,1071.9 L1380.5,1069.3 L1378.6,1066.3 L1376.8,1063.7 L1375.4,1062.3 L1374.0,1061.2 L1372.7,1060.7 L1371.6,1060.6 L1370.5,1060.8 L1369.4,1061.0 L1368.4,1061.2 L1367.3,1061.4 L1366.3,1062.0 L1365.3,1063.0 L1364.5,1064.4 L1363.7,1066.3 L1363.0,1069.4 L1362.5,1072.9 L1361.8,1076.0 L1361.0,1078.6 L1360.1,1080.8 L1359.2,1082.5 L1358.1,1083.7 L1357.0,1084.3 L1355.8,1084.0 L1354.5,1083.2 L1353.1,1081.8 L1351.7,1079.8 L1350.3,1077.5 L1348.8,1074.7 L1347.3,1071.4 L1345.9,1068.6 L1344.7,1067.0 L1343.5,1065.8 L1342.3,1065.1 L1341.2,1064.9 L1340.1,1064.9Z M1100.6,830.5 a223.0,223.0 0 1,0 446.0,0 a223.0,223.0 0 1,0 -446.0,0Z" fill="#0000ee" fill-rule="evenodd"/>
<circle cx="1257.0" cy="730.7" r="101.8" fill="none" stroke="#0000ee" stroke-width="13.5"/>
<circle cx="1443.3" cy="822.8" r="101.8" fill="none" stroke="#0000ee" stroke-width="13.5"/>
<circle cx="1270.4" cy="938.1" r="101.8" fill="none" stroke="#0000ee" stroke-width="13.5"/>
<circle cx="1323.6" cy="830.5" r="14.0" fill="#0000ee"/>
<path d="M1495.1,659.3 a41.5,41.5 0 1,0 83.0,0 a41.5,41.5 0 1,0 -83.0,0Z M1557.4,648.4 a7.5,7.5 0 1,0 15.0,0 a7.5,7.5 0 1,0 -15.0,0Z M1552.6,678.4 a7.5,7.5 0 1,0 15.0,0 a7.5,7.5 0 1,0 -15.0,0Z M1524.4,689.2 a7.5,7.5 0 1,0 15.0,0 a7.5,7.5 0 1,0 -15.0,0Z M1500.8,670.2 a7.5,7.5 0 1,0 15.0,0 a7.5,7.5 0 1,0 -15.0,0Z M1505.6,640.2 a7.5,7.5 0 1,0 15.0,0 a7.5,7.5 0 1,0 -15.0,0Z M1533.8,629.4 a7.5,7.5 0 1,0 15.0,0 a7.5,7.5 0 1,0 -15.0,0Z" fill="#0000ee" fill-rule="evenodd"/>
<circle cx="1536.6" cy="659.3" r="8" fill="#1a1a1a"/>
<circle cx="1323.6" cy="830.5" r="8" fill="#1a1a1a"/>
<circle cx="1319" cy="243.4" r="8" fill="#1a1a1a"/></g><defs><clipPath id="hc"><path d="M383.7 163.2 C405 162.5 431 176 437.5 205 C439.2 214 438.6 226 438.2 233.5 C441.8 233 443.2 238 442.2 246 C441 256 438.5 264.5 433.5 266.5 C430.5 276 426 287 421 297 L422.8 300 L422.8 326.8 C417 336 407 342.5 398 346 C392 348.6 388 350 384.5 349.8 C378 349.2 372 346.6 366 342.5 C358 337.5 350.5 332.5 347 328.5 L350.3 305 L351 298.5 C347.5 290 344.5 281 342.3 272 C341.5 269.5 339 268 336.6 267.5 C332 266.5 329.6 257 329 248 C328.5 240 329.8 233.5 333.6 234.5 C333 226 332.6 214 334.2 206 C339 178 362 164 383.7 163.2Z"/></clipPath><radialGradient id="hg" gradientUnits="userSpaceOnUse" cx="392" cy="215" r="95"><stop offset="0" stop-color="#a6a6a6"/><stop offset=".45" stop-color="#949494"/><stop offset=".8" stop-color="#848484"/><stop offset="1" stop-color="#767676"/></radialGradient><filter id="b2" x="-30%" y="-30%" width="160%" height="160%"><feGaussianBlur stdDeviation="2"/></filter><filter id="b1" x="-30%" y="-30%" width="160%" height="160%"><feGaussianBlur stdDeviation="1.1"/></filter><filter id="b4" x="-40%" y="-40%" width="180%" height="180%"><feGaussianBlur stdDeviation="4"/></filter></defs><path d="M383.7 163.2 C405 162.5 431 176 437.5 205 C439.2 214 438.6 226 438.2 233.5 C441.8 233 443.2 238 442.2 246 C441 256 438.5 264.5 433.5 266.5 C430.5 276 426 287 421 297 L422.8 300 L422.8 326.8 C417 336 407 342.5 398 346 C392 348.6 388 350 384.5 349.8 C378 349.2 372 346.6 366 342.5 C358 337.5 350.5 332.5 347 328.5 L350.3 305 L351 298.5 C347.5 290 344.5 281 342.3 272 C341.5 269.5 339 268 336.6 267.5 C332 266.5 329.6 257 329 248 C328.5 240 329.8 233.5 333.6 234.5 C333 226 332.6 214 334.2 206 C339 178 362 164 383.7 163.2Z" fill="url(#hg)"/><g clip-path="url(#hc)"><path d="M345 300 L352 306 C362 316 378 321 389 321 C402 320 414 312 424 298 L426 352 L345 352Z" fill="#777" filter="url(#b1)"/><path d="M352 304 C362 314 378 319 389 318.5 C402 318 414 310 423 297" fill="none" stroke="#5e5e5e" stroke-width="3" filter="url(#b2)"/><ellipse cx="372" cy="334" rx="10" ry="12" fill="#8a8a8a" filter="url(#b4)"/><ellipse cx="398" cy="200" rx="16" ry="9" fill="#a8a8a8" filter="url(#b4)"/><path d="M330 200 C333 240 340 272 351 300 L335 304 L326 200Z" fill="#707070" filter="url(#b2)"/><path d="M440 200 C438 240 431 272 421 298 L438 300 L446 200Z" fill="#6c6c6c" filter="url(#b2)"/><path d="M352 231 C360 226 372 226 381 231 M393 231 C402 226 414 227 422 232" fill="none" stroke="#686868" stroke-width="3" filter="url(#b1)"/><ellipse cx="367" cy="237.5" rx="10.5" ry="5" fill="#b2b2b2" filter="url(#b2)"/><ellipse cx="409" cy="238.5" rx="10.5" ry="5" fill="#b2b2b2" filter="url(#b2)"/><path d="M358 242.5 C364 245 372 245 378 242 M399 243 C405 246 413 246 420 243" fill="none" stroke="#6a6a6a" stroke-width="1.6" filter="url(#b1)"/><path d="M384 236 C383 248 380 256 377.5 262 C381 266 392 266.5 397 262 C394 254 392.5 246 392.5 236Z" fill="#8f8f8f" filter="url(#b1)"/><path d="M392.5 238 C393 250 395 258 398 262.5" fill="none" stroke="#626262" stroke-width="2.4" filter="url(#b1)"/><path d="M377 263.5 C382 267.5 392 267.5 398 263.5" fill="none" stroke="#5c5c5c" stroke-width="2" filter="url(#b1)"/><ellipse cx="386.5" cy="258" rx="3.6" ry="3" fill="#a4a4a4" filter="url(#b1)"/><ellipse cx="361" cy="262" rx="7" ry="10" fill="#979797" filter="url(#b4)"/><ellipse cx="414" cy="262" rx="6" ry="9" fill="#8a8a8a" filter="url(#b4)"/><path d="M368 262 C366 272 366 280 369 286 M406 262 C409 272 409 280 406 287" fill="none" stroke="#6c6c6c" stroke-width="1.6" filter="url(#b1)"/><path d="M362 268 C361 276 363 283 366 288 M410 270 C411 277 410 283 408 287" fill="none" stroke="#b0b0b0" stroke-width="2.2" filter="url(#b1)"/><path d="M374 279.5 C381 277.5 394 277.5 402 279.5" fill="none" stroke="#5e5e5e" stroke-width="1.8" filter="url(#b1)"/><path d="M377 284 C383 286 393 286 399 284" fill="none" stroke="#a2a2a2" stroke-width="2.2" filter="url(#b1)"/><path d="M379 289.5 C384 291 392 291 397 289.5" fill="none" stroke="#666" stroke-width="1.6" filter="url(#b1)"/><ellipse cx="388" cy="299" rx="9" ry="4.5" fill="#a0a0a0" filter="url(#b2)"/><path d="M331.5 238 C330.5 248 332.5 258 335.5 264" fill="none" stroke="#9a9a9a" stroke-width="1.6" filter="url(#b1)"/><path d="M440 238 C441 248 439 258 436 264" fill="none" stroke="#8a8a8a" stroke-width="1.6" filter="url(#b1)"/></g></svg>
<div style="position:absolute;left:282.00px;top:1172.00px;width:2281.00px;height:2.50px;background:#f4f4f4;"></div>
<div style="position:absolute;left:282.00px;top:1174.50px;width:2281.00px;height:3.50px;background:#4c4848;"></div>
<div style="position:absolute;left:282.00px;top:1178.00px;width:2281.00px;height:20.00px;background:#a0a2a1;"></div>
<div style="position:absolute;left:282.00px;top:1198.00px;width:2281.00px;height:23.00px;background:linear-gradient(#7c7c7c,#757575 60%,#4c4c4c);"></div>
<div style="position:absolute;left:281.60px;top:1220.00px;width:2281.40px;height:1.20px;background:#f2f2f2;"></div>
<div style="position:absolute;left:283.60px;top:1221.00px;width:2277.20px;height:215.60px;background:linear-gradient(#c4c4c4 0%,#d4d4d4 25%,#e8e8e8 50%,#d8d8d8 75%,#c6c6c6 100%);border:1px solid #555;box-sizing:border-box;"></div>
<div style="position:absolute;left:2560.80px;top:1221.00px;width:2.20px;height:218.00px;background:#f0f0f0;"></div>
<div style="position:absolute;left:281.60px;top:1436.60px;width:2281.40px;height:2.40px;background:#e4e4e4;"></div>
<span class="t" style="left:285.60px;top:1177.69px;font-size:11px;color:#676767;letter-spacing:0.056px;">Properties</span>
<svg class="abs" style="left:2529.5px;top:1182px" width="30" height="12" viewBox="0 0 30 12"><path d="M5.5 1.5H9.5V6.5H5.5Z" fill="none" stroke="#444" stroke-width="1"/><path d="M8.6 1.5V6.5M4.3 6.9H10.7M7.5 7V10.5" stroke="#444" stroke-width="1"/><path d="M22.5 1.8L29 8.8M29 1.8L22.5 8.8" stroke="#444" stroke-width="1.1"/></svg>
<div class="abs" style="left:284px;top:1202.3px;width:12.8px;height:12.5px;background:#ececec;"></div>
<div class="abs" style="left:300.25px;top:1202.3px;width:12.8px;height:12.5px;background:#ececec;"></div>
<div class="abs" style="left:316.25px;top:1202.3px;width:12.8px;height:12.5px;background:#ececec;"></div>
<div class="abs" style="left:332.25px;top:1202.3px;width:12.8px;height:12.5px;background:#ececec;"></div>
<svg class="abs" style="left:284px;top:1202.3px" width="62" height="13" viewBox="0 0 62 13"><g fill="#3c3c3c"><path d="M3.2 3V10H4.4V3Z M9.4 3V10L4.8 6.5Z"/><path d="M25 3V10L20.2 6.5Z"/><path d="M36.5 3V10L41.3 6.5Z"/><path d="M51.5 3V10L56.2 6.5Z M56.6 3V10H57.8V3Z"/></g></svg>
<svg class="abs" style="left:0;top:0" width="480" height="1222" viewBox="0 0 480 1222"><path d="M437 1221 V1204.5 Q437 1202.3 439.5 1202.3 H458 Q460.5 1202.3 462 1204 L476 1221Z" fill="#d2d5da" stroke="#eee" stroke-width=".7"/><path d="M349.4 1221 V1204.3 Q349.4 1202.3 351.5 1202.3 H429.5 Q431.5 1202.3 432.8 1203.8 L447 1221Z" fill="#fff"/></svg>
<span class="t" style="left:356.25px;top:1199.69px;font-size:11px;color:#000;font-weight:bold;letter-spacing:-0.296px;">Selected Props</span>
<span class="t" style="left:445.60px;top:1199.69px;font-size:11px;color:#000;font-weight:bold;letter-spacing:-0.425px;">log</span>
<div class="abs" style="left:297.0px;top:1235.0px;width:508.0px;height:197.0px;box-sizing:border-box;border:1px solid #d0d0d0;border-radius:3px;box-shadow:inset 0 0 0 1px rgba(255,255,255,.85), 0 0 0 0 #fff;"></div><div class="abs" style="left:301.8px;top:1234.0px;width:129.8px;height:3px;background:#c9c9c9;"></div><span class="t" style="left:304.75px;top:1223.69px;font-size:11px;color:#000;letter-spacing:-0.040px;">Current Object Properties</span>
<div class="abs" style="left:513.8px;top:1243.0px;width:289.5px;height:188.0px;box-sizing:border-box;border:1px solid #d0d0d0;border-radius:3px;box-shadow:inset 0 0 0 1px rgba(255,255,255,.85), 0 0 0 0 #fff;"></div><div class="abs" style="left:517.5px;top:1242.0px;width:67.8px;height:3px;background:#cbcbcb;"></div><span class="t" style="left:520.50px;top:1231.89px;font-size:11px;color:#000;letter-spacing:-0.200px;">Modifications</span>
<div class="abs" style="left:354px;top:1248.5px;width:66px;height:12.5px;background:rgba(255,255,255,.35);"></div>
<span class="t" style="left:356.90px;top:1244.94px;font-size:11px;color:#000;letter-spacing:-0.310px;">Object Name</span>
<div class="abs" style="left:312.5px;top:1264.4px;width:117.5px;height:17.9px;background:#fff;"></div>
<span class="t" style="left:353.75px;top:1262.69px;font-size:11px;color:#000;letter-spacing:-0.220px;">Cage-2</span>
<div class="abs" style="left:435.6px;top:1262.8px;width:46.9px;height:19.8px;box-sizing:border-box;border:1px solid #707070;border-radius:3px;background:linear-gradient(#f3f3f3 0%,#ececec 48%,#dedede 52%,#d0d0d0 100%);box-shadow:inset 0 0 0 1px rgba(255,255,255,.8);"></div><span class="t" style="left:439.75px;top:1262.69px;font-size:11px;color:#000;letter-spacing:-0.410px;">Change</span>
<div class="abs" style="left:306px;top:1294px;width:88px;height:13px;background:rgba(255,255,255,.25);"></div>
<span class="t" style="left:308.75px;top:1290.59px;font-size:11px;color:#000;letter-spacing:-0.056px;">Rotational Angle:</span>
<div class="abs" style="left:399.4px;top:1293.0px;width:66.9px;height:17.6px;background:#fff;"></div>
<span class="t" style="left:404.75px;top:1291.79px;font-size:11px;color:#000;letter-spacing:-0.167px;">141.466</span>
<div class="abs" style="left:321px;top:1320px;width:158px;height:13px;background:rgba(255,255,255,.22);"></div>
<span class="t" style="left:323.75px;top:1316.79px;font-size:11px;color:#000;letter-spacing:-0.221px;">This Gear LINKS to the following</span>
<div class="abs" style="left:329.4px;top:1337.2px;width:136.6px;height:53.3px;background:#fff;border:1px solid #6a6a6a;box-sizing:border-box;"></div>
<div class="abs" style="left:331.3px;top:1339px;width:133.1px;height:12.6px;background:#3399ff;"></div>
<span class="t" style="left:332.50px;top:1335.59px;font-size:11px;color:#fff;letter-spacing:-0.091px;">Center Wheel</span>
<div class="abs" style="left:298px;top:1394.5px;width:41px;height:13px;background:rgba(255,255,255,.3);"></div>
<span class="t" style="left:299.75px;top:1390.59px;font-size:11px;color:#000;letter-spacing:-0.193px;">Material</span>
<div class="abs" style="left:299.4px;top:1410.2px;width:118.1px;height:19.2px;background:#fff;"></div>
<span class="t" style="left:304.40px;top:1408.69px;font-size:11px;color:#000;letter-spacing:-0.382px;">Black Rubber</span>
<svg class="abs" style="left:405.8px;top:1418px" width="8" height="5" viewBox="0 0 8 5"><path d="M0 0H8L4 4.6Z" fill="#000"/></svg>
<div class="abs" style="left:431.4px;top:1412.4px;width:12.5px;height:12.5px;box-sizing:border-box;border:1px solid #8e8f8f;background:#f4f4f4;box-shadow:inset 0 0 0 1px #fafafa, inset 2px 2px 3px #ccc;"></div><svg class="abs" style="left:431.4px;top:1412.4px" width="12.5" height="12.5" viewBox="0 0 13 13"><path d="M3 5.6 L5.2 10.2 L10.3 2.2" fill="none" stroke="#4a5f97" stroke-width="1.9" stroke-linecap="round" stroke-linejoin="round"/></svg>
<span class="t" style="left:447.50px;top:1408.69px;font-size:11px;color:#000;letter-spacing:-0.492px;">3d Grid</span>
<div class="abs" style="left:525.3px;top:1252.5px;width:50.5px;height:20.1px;box-sizing:border-box;border:1px solid #707070;border-radius:3px;background:linear-gradient(#f3f3f3 0%,#ececec 48%,#dedede 52%,#d0d0d0 100%);box-shadow:inset 0 0 0 1px rgba(255,255,255,.8);"></div><span class="t" style="left:534.75px;top:1252.69px;font-size:11px;color:#000;letter-spacing:-0.190px;">Delete</span>
<div class="abs" style="left:586.2px;top:1252.5px;width:84.5px;height:20.1px;box-sizing:border-box;border:1px solid #707070;border-radius:3px;background:linear-gradient(#f3f3f3 0%,#ececec 48%,#dedede 52%,#d0d0d0 100%);box-shadow:inset 0 0 0 1px rgba(255,255,255,.8);"></div><span class="t" style="left:598.90px;top:1252.69px;font-size:11px;color:#000;letter-spacing:-0.395px;">Add Linkage</span>
<div class="abs" style="left:679.2px;top:1252.5px;width:84.7px;height:20.1px;box-sizing:border-box;border:1px solid #707070;border-radius:3px;background:linear-gradient(#f3f3f3 0%,#ececec 48%,#dedede 52%,#d0d0d0 100%);box-shadow:inset 0 0 0 1px rgba(255,255,255,.8);"></div><span class="t" style="left:690.30px;top:1252.69px;font-size:11px;color:#000;letter-spacing:-0.355px;">Remove Link</span>
<div class="abs" style="left:525.3px;top:1283.4px;width:50.5px;height:20.1px;box-sizing:border-box;border:1px solid #707070;border-radius:3px;background:linear-gradient(#f3f3f3 0%,#ececec 48%,#dedede 52%,#d0d0d0 100%);box-shadow:inset 0 0 0 1px rgba(255,255,255,.8);"></div><span class="t" style="left:528.50px;top:1283.69px;font-size:11px;color:#000;letter-spacing:-0.558px;">ReSpoke</span>
<div class="abs" style="left:586.2px;top:1283.4px;width:84.5px;height:20.1px;box-sizing:border-box;border:1px solid #707070;border-radius:3px;background:linear-gradient(#f3f3f3 0%,#ececec 48%,#dedede 52%,#d0d0d0 100%);box-shadow:inset 0 0 0 1px rgba(255,255,255,.8);"></div><span class="t" style="left:592.20px;top:1283.69px;font-size:11px;color:#000;letter-spacing:-0.029px;">Move on Shaft</span>
<div class="abs" style="left:679.2px;top:1283.4px;width:84.7px;height:20.1px;box-sizing:border-box;border:1px solid #707070;border-radius:3px;background:linear-gradient(#f3f3f3 0%,#ececec 48%,#dedede 52%,#d0d0d0 100%);box-shadow:inset 0 0 0 1px rgba(255,255,255,.8);"></div><span class="t" style="left:687.40px;top:1283.69px;font-size:11px;color:#000;letter-spacing:-0.282px;">Move on Gear</span>
<div class="abs" style="left:525.3px;top:1312.4px;width:54.6px;height:20.0px;box-sizing:border-box;border:1px solid #707070;border-radius:3px;background:linear-gradient(#f3f3f3 0%,#ececec 48%,#dedede 52%,#d0d0d0 100%);box-shadow:inset 0 0 0 1px rgba(255,255,255,.8);"></div><span class="t" style="left:528.20px;top:1312.69px;font-size:11px;color:#000;letter-spacing:-0.100px;">Add Shaft</span>
<div class="abs" style="left:586.2px;top:1312.4px;width:84.5px;height:20.0px;box-sizing:border-box;border:1px solid #707070;border-radius:3px;background:linear-gradient(#f3f3f3 0%,#ececec 48%,#dedede 52%,#d0d0d0 100%);box-shadow:inset 0 0 0 1px rgba(255,255,255,.8);"></div><span class="t" style="left:595.20px;top:1312.69px;font-size:11px;color:#000;letter-spacing:-0.275px;">Move NGrave</span>
<div class="abs" style="left:679.2px;top:1312.4px;width:83.7px;height:20.0px;box-sizing:border-box;border:1px solid #707070;border-radius:3px;background:linear-gradient(#f3f3f3 0%,#ececec 48%,#dedede 52%,#d0d0d0 100%);box-shadow:inset 0 0 0 1px rgba(255,255,255,.8);"></div><span class="t" style="left:686.60px;top:1312.69px;font-size:11px;color:#000;letter-spacing:0.104px;">Shaft to Shaft</span>
<div class="abs" style="left:517.5px;top:1346.9px;width:126.5px;height:45.5px;box-sizing:border-box;border:1px solid #d0d0d0;border-radius:3px;box-shadow:inset 0 0 0 1px rgba(255,255,255,.85), 0 0 0 0 #fff;"></div><div class="abs" style="left:521.6px;top:1345.9px;width:37.6px;height:3px;background:#dedede;"></div><span class="t" style="left:524.60px;top:1335.69px;font-size:11px;color:#000;letter-spacing:-0.442px;">Collars</span>
<div class="abs" style="left:523px;top:1355px;width:50px;height:13px;background:rgba(255,255,255,.3);"></div>
<div class="abs" style="left:586px;top:1355px;width:46px;height:13px;background:rgba(255,255,255,.3);"></div>
<span class="t" style="left:524.60px;top:1350.99px;font-size:11px;color:#000;letter-spacing:-0.157px;">Radius %</span>
<span class="t" style="left:588.00px;top:1350.99px;font-size:11px;color:#000;letter-spacing:0.125px;">Width %</span>
<div class="abs" style="left:527.6px;top:1370.8px;width:40.8px;height:18.4px;background:#fff;"></div>
<span class="t" style="left:532.60px;top:1369.99px;font-size:11px;color:#000;">0</span>
<div class="abs" style="left:585.5px;top:1370.8px;width:42.7px;height:18.4px;background:#fff;"></div>
<span class="t" style="left:591.00px;top:1369.99px;font-size:11px;color:#000;letter-spacing:-0.650px;">25</span>
<div class="abs" style="left:654.3px;top:1343.5px;width:105.6px;height:16.9px;box-sizing:border-box;border:1px solid #707070;border-radius:3px;background:linear-gradient(#f3f3f3 0%,#ececec 48%,#dedede 52%,#d0d0d0 100%);box-shadow:inset 0 0 0 1px rgba(255,255,255,.8);"></div><span class="t" style="left:671.40px;top:1341.79px;font-size:11px;color:#000;letter-spacing:-0.123px;">Send to 3-axis</span>
<div class="abs" style="left:655.1px;top:1366.7px;width:105.6px;height:16.8px;box-sizing:border-box;border:1px solid #707070;border-radius:3px;background:linear-gradient(#f3f3f3 0%,#ececec 48%,#dedede 52%,#d0d0d0 100%);box-shadow:inset 0 0 0 1px rgba(255,255,255,.8);"></div><span class="t" style="left:668.50px;top:1364.39px;font-size:11px;color:#000;letter-spacing:-0.087px;">Send to 4th axis</span>
<div class="abs" style="left:516.5px;top:1398.8px;width:127.7px;height:32.2px;box-sizing:border-box;border:1px solid #d0d0d0;border-radius:3px;box-shadow:inset 0 0 0 1px rgba(255,255,255,.85), 0 0 0 0 #fff;"></div><div class="abs" style="left:520.9px;top:1397.8px;width:30.4px;height:3px;background:#d0d0d0;"></div><span class="t" style="left:523.90px;top:1387.99px;font-size:11px;color:#000;letter-spacing:-0.633px;">Oops</span>
<div class="abs" style="left:523.5px;top:1408.0px;width:50.8px;height:19.2px;box-sizing:border-box;border:1px solid #b5b5b5;border-radius:3px;background:linear-gradient(#f4f4f4,#f0f0f0);box-shadow:inset 0 0 0 1px rgba(255,255,255,.8);"></div><span class="t" style="left:535.50px;top:1407.59px;font-size:11px;color:#9c9c9c;letter-spacing:-0.533px;">Undo</span>
<div class="abs" style="left:583.6px;top:1408.0px;width:51.0px;height:19.2px;box-sizing:border-box;border:1px solid #b5b5b5;border-radius:3px;background:linear-gradient(#f4f4f4,#f0f0f0);box-shadow:inset 0 0 0 1px rgba(255,255,255,.8);"></div><span class="t" style="left:595.50px;top:1407.59px;font-size:11px;color:#9c9c9c;letter-spacing:-0.567px;">Redo</span>
<div class="abs" style="left:660.0px;top:1397.2px;width:125.8px;height:30.1px;box-sizing:border-box;border:1px solid #d0d0d0;border-radius:3px;box-shadow:inset 0 0 0 1px rgba(255,255,255,.85), 0 0 0 0 #fff;"></div><div class="abs" style="left:664.8px;top:1396.2px;width:80.9px;height:3px;background:#d0d0d0;"></div><span class="t" style="left:667.80px;top:1385.99px;font-size:11px;color:#000;letter-spacing:0.064px;">Rotation Adjust</span>
<div class="abs" style="left:669.2px;top:1403.9px;width:17.4px;height:19.7px;box-sizing:border-box;border:1px solid #707070;border-radius:3px;background:linear-gradient(#f3f3f3 0%,#ececec 48%,#dedede 52%,#d0d0d0 100%);box-shadow:inset 0 0 0 1px rgba(255,255,255,.8);"></div><span class="t" style="left:674.23px;top:1402.69px;font-size:11px;color:#000;">--</span>
<div class="abs" style="left:694.5px;top:1403.9px;width:17.1px;height:19.7px;box-sizing:border-box;border:1px solid #707070;border-radius:3px;background:linear-gradient(#f3f3f3 0%,#ececec 48%,#dedede 52%,#d0d0d0 100%);box-shadow:inset 0 0 0 1px rgba(255,255,255,.8);"></div><span class="t" style="left:699.85px;top:1403.69px;font-size:11px;color:#000;">+</span>
<div class="abs" style="left:721.6px;top:1403.9px;width:43.8px;height:19.7px;box-sizing:border-box;border:1px solid #707070;border-radius:3px;background:linear-gradient(#f3f3f3 0%,#ececec 48%,#dedede 52%,#d0d0d0 100%);box-shadow:inset 0 0 0 1px rgba(255,255,255,.8);"></div><span class="t" style="left:729.70px;top:1403.79px;font-size:11px;color:#000;letter-spacing:-0.438px;">Angle</span>
<div class="abs" style="left:808.6px;top:1240.3px;width:255.0px;height:90.3px;box-sizing:border-box;border:1px solid #d0d0d0;border-radius:3px;box-shadow:inset 0 0 0 1px rgba(255,255,255,.85), 0 0 0 0 #fff;"></div><div class="abs" style="left:812.6px;top:1239.3px;width:158.1px;height:3px;background:#cbcbcb;"></div><span class="t" style="left:815.60px;top:1230.19px;font-size:11px;color:#000;letter-spacing:-0.115px;">Calculators and Statistical tools.</span>
<div class="abs" style="left:826.4px;top:1259.5px;width:51.3px;height:20.8px;box-sizing:border-box;border:1px solid #707070;border-radius:3px;background:linear-gradient(#f3f3f3 0%,#ececec 48%,#dedede 52%,#d0d0d0 100%);box-shadow:inset 0 0 0 1px rgba(255,255,255,.8);"></div><span class="t" style="left:830.40px;top:1259.99px;font-size:11px;color:#000;letter-spacing:-0.367px;">Measure</span>
<div class="abs" style="left:888.1px;top:1259.5px;width:90.5px;height:20.2px;box-sizing:border-box;border:1px solid #707070;border-radius:3px;background:linear-gradient(#f3f3f3 0%,#ececec 48%,#dedede 52%,#d0d0d0 100%);box-shadow:inset 0 0 0 1px rgba(255,255,255,.8);"></div><span class="t" style="left:892.30px;top:1259.99px;font-size:11px;color:#000;letter-spacing:-0.246px;">Project Summary</span>
<div class="abs" style="left:808.6px;top:1335.8px;width:257.2px;height:43.8px;box-sizing:border-box;border:1px solid #d0d0d0;border-radius:3px;box-shadow:inset 0 0 0 1px rgba(255,255,255,.85), 0 0 0 0 #fff;"></div><div class="abs" style="left:812.6px;top:1334.8px;width:33.2px;height:3px;background:#e0e0e0;"></div><span class="t" style="left:815.60px;top:1325.99px;font-size:11px;color:#000;letter-spacing:-0.700px;">Media</span>
<div class="abs" style="left:822.4px;top:1350.7px;width:51.2px;height:20.8px;box-sizing:border-box;border:1px solid #707070;border-radius:3px;background:linear-gradient(#f3f3f3 0%,#ececec 48%,#dedede 52%,#d0d0d0 100%);box-shadow:inset 0 0 0 1px rgba(255,255,255,.8);"></div><span class="t" style="left:824.70px;top:1350.99px;font-size:11px;color:#000;letter-spacing:-0.229px;">Snapshot</span>
<div class="abs" style="left:888.1px;top:1350.7px;width:51.3px;height:20.8px;box-sizing:border-box;border:1px solid #707070;border-radius:3px;background:linear-gradient(#f3f3f3 0%,#ececec 48%,#dedede 52%,#d0d0d0 100%);box-shadow:inset 0 0 0 1px rgba(255,255,255,.8);"></div><span class="t" style="left:904.20px;top:1350.99px;font-size:11px;color:#000;letter-spacing:-0.475px;">Rec</span>
<div class="abs" style="left:945.1px;top:1350.3px;width:12.5px;height:12.5px;box-sizing:border-box;border:1px solid #8e8f8f;background:#f4f4f4;box-shadow:inset 0 0 0 1px #fafafa, inset 2px 2px 3px #ccc;"></div>
<span class="t" style="left:960.70px;top:1346.79px;font-size:11px;color:#000;letter-spacing:-0.456px;">Sel Codec</span>
<div class="abs" style="left:807.8px;top:1388.6px;width:256.5px;height:25.6px;box-sizing:border-box;border:1px solid #d0d0d0;border-radius:3px;box-shadow:inset 0 0 0 1px rgba(255,255,255,.85), 0 0 0 0 #fff;"></div><div class="abs" style="left:811.5px;top:1387.6px;width:139.9px;height:3px;background:#d4d4d4;"></div><span class="t" style="left:814.50px;top:1377.79px;font-size:11px;color:#000;letter-spacing:-0.319px;">Simulation Blockage Solution</span>
<svg class="abs" style="left:816.9px;top:1399.1px" width="14" height="14" viewBox="-7 -7 14 14"><defs><radialGradient id="rg823" cx=".4" cy=".35" r=".7"><stop offset="0" stop-color="#fff"/><stop offset="1" stop-color="#cfd0d0"/></radialGradient></defs><circle r="5.8" fill="url(#rg823)" stroke="#8e8f8f" stroke-width="1"/><circle r="3" fill="#1a7aa8"/><circle cx="-.8" cy="-.9" r="1.1" fill="#7fd0ee"/></svg>
<span class="t" style="left:833.40px;top:1395.99px;font-size:11px;color:#000;letter-spacing:0.085px;">Ignore/loop</span>
<svg class="abs" style="left:895.7px;top:1399.1px" width="14" height="14" viewBox="-7 -7 14 14"><defs><radialGradient id="rg902" cx=".4" cy=".35" r=".7"><stop offset="0" stop-color="#fff"/><stop offset="1" stop-color="#cfd0d0"/></radialGradient></defs><circle r="5.8" fill="url(#rg902)" stroke="#8e8f8f" stroke-width="1"/></svg>
<span class="t" style="left:912.70px;top:1395.99px;font-size:11px;color:#000;letter-spacing:-0.383px;">Stop</span>
<svg class="abs" style="left:948.8px;top:1399.1px" width="14" height="14" viewBox="-7 -7 14 14"><defs><radialGradient id="rg955" cx=".4" cy=".35" r=".7"><stop offset="0" stop-color="#fff"/><stop offset="1" stop-color="#cfd0d0"/></radialGradient></defs><circle r="5.8" fill="url(#rg955)" stroke="#8e8f8f" stroke-width="1"/></svg>
<span class="t" style="left:965.50px;top:1395.99px;font-size:11px;color:#000;letter-spacing:-0.192px;">Reverse</span>
</body></html>
